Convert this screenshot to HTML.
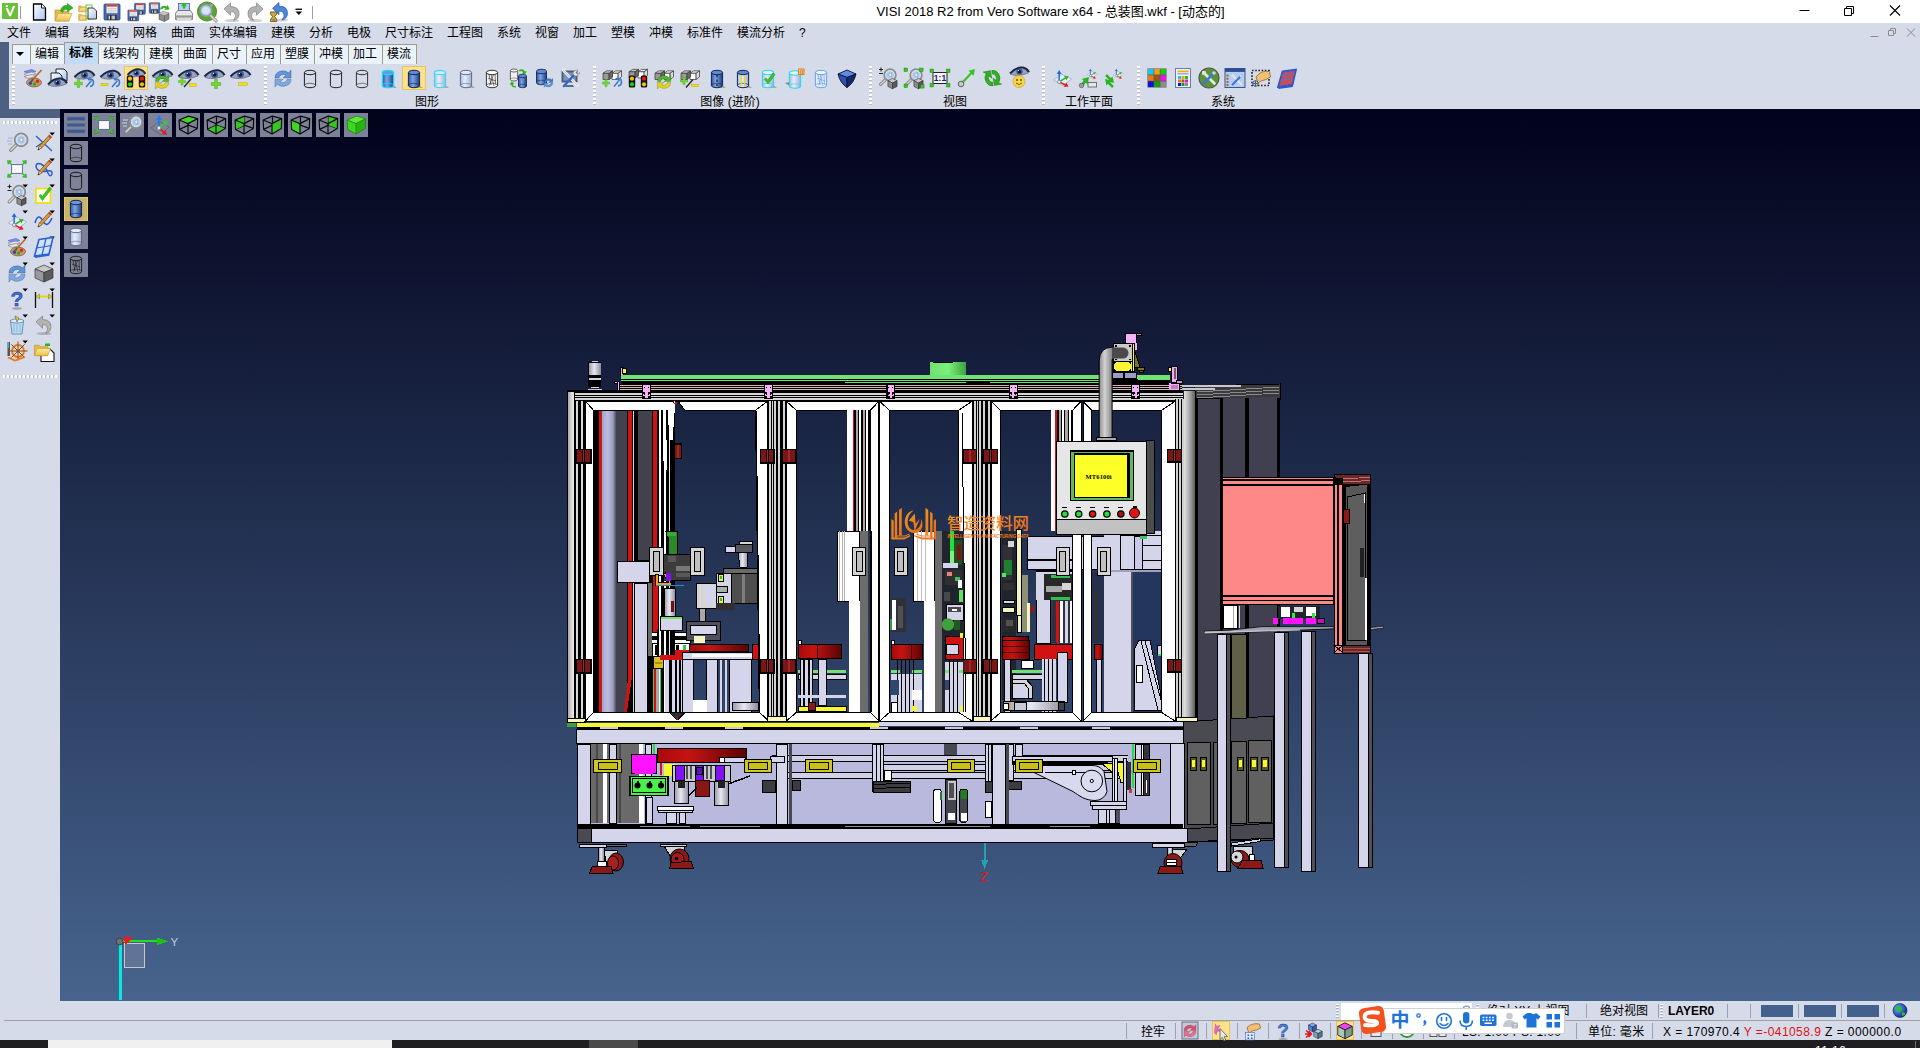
<!DOCTYPE html>
<html lang="zh-CN">
<head>
<meta charset="utf-8">
<title>VISI 2018 R2 from Vero Software x64 - 总装图.wkf - [动态的]</title>
<style>
html,body{margin:0;padding:0;}
body{width:1920px;height:1048px;overflow:hidden;background:#d6dbe9;position:relative;
 font-family:"Liberation Sans","Noto Sans CJK SC",sans-serif;font-size:12px;color:#000;}
.abs{position:absolute;}
#title{left:0;top:0;width:1920px;height:23px;background:#fff;}
#title .cap{left:0;width:2101px;top:4px;text-align:center;font-size:13px;line-height:15px;color:#000;white-space:nowrap;}
#menubar{left:0;top:23px;width:1920px;height:20px;background:#d6dbe9;}
#menubar span{position:absolute;top:2px;line-height:16px;font-size:12px;white-space:nowrap;}
#strip{left:0;top:42px;width:60px;height:76px;background:#4d6082;}
#tbpanel{left:9px;top:42px;width:1911px;height:67px;background:#d6dbe9;}
.tab{position:absolute;top:44px;height:20px;background:#eaf2fb;border:1px solid #a09b82;border-bottom:none;box-sizing:border-box;
 text-align:center;line-height:18px;font-size:12px;padding-right:1px;}
.tab.sel{top:42px;height:22px;background:#c2dcf5;font-weight:bold;line-height:20px;}
.grp{position:absolute;top:95px;font-size:12px;line-height:14px;white-space:nowrap;transform:translateX(-50%);}
.grip{position:absolute;top:66px;width:3px;height:40px;background-image:repeating-linear-gradient(180deg,#fff 0,#fff 2px,#b8bccb 2px,#b8bccb 3px,transparent 3px,transparent 4px);}
#view{left:60px;top:109px;width:1860px;height:892px;background:linear-gradient(180deg,#01021b 0%,#47648e 100%);}
#left{left:0;top:118px;width:60px;height:883px;background:#d6dbe9;}
.hgrip{position:absolute;left:3px;width:54px;height:3px;background-image:repeating-linear-gradient(90deg,#fff 0,#fff 2px,#b8bccb 2px,#b8bccb 3px,transparent 3px,transparent 4px);}
.vb{position:absolute;width:24px;height:24px;background:#7e8298;}
.vb.on{background:#c9b46e;box-shadow:inset 0 0 0 1px #e8c860;}
#status{left:0;top:1001px;width:1920px;height:39px;background:#d6dbe9;}
#task{left:0;top:1040px;width:1920px;height:8px;background:#1f1f21;overflow:hidden;}
.st{position:absolute;font-size:12px;line-height:14px;white-space:nowrap;}
.hl{position:absolute;background:#ffe28a;border:1px solid #e5c365;box-sizing:border-box;}
svg{position:absolute;overflow:visible;}
</style>
</head>
<body>
<div id="title" class="abs"><div class="cap abs">VISI 2018 R2 from Vero Software x64 - 总装图.wkf - [动态的]</div></div>
<div id="menubar" class="abs">
<span style="left:7px">文件</span>
<span style="left:45px">编辑</span>
<span style="left:83px">线架构</span>
<span style="left:133px">网格</span>
<span style="left:171px">曲面</span>
<span style="left:209px">实体编辑</span>
<span style="left:271px">建模</span>
<span style="left:309px">分析</span>
<span style="left:347px">电极</span>
<span style="left:385px">尺寸标注</span>
<span style="left:447px">工程图</span>
<span style="left:497px">系统</span>
<span style="left:535px">视窗</span>
<span style="left:573px">加工</span>
<span style="left:611px">塑模</span>
<span style="left:649px">冲模</span>
<span style="left:687px">标准件</span>
<span style="left:737px">模流分析</span>
<span style="left:799px">?</span>
</div>
<div id="strip" class="abs"></div>
<div id="tbpanel" class="abs"></div>
<div class="tab" style="left:12px;width:19px"><svg width="8" height="4" style="left:3px;top:7px"><path d="M0 0h8l-4 4z" fill="#000"/></svg></div>
<div class="tab" style="left:30px;width:35px">编辑</div>
<div class="tab sel" style="left:64px;width:35px">标准</div>
<div class="tab" style="left:98px;width:47px">线架构</div>
<div class="tab" style="left:144px;width:35px">建模</div>
<div class="tab" style="left:178px;width:35px">曲面</div>
<div class="tab" style="left:212px;width:35px">尺寸</div>
<div class="tab" style="left:246px;width:35px">应用</div>
<div class="tab" style="left:280px;width:35px">塑膜</div>
<div class="tab" style="left:314px;width:35px">冲模</div>
<div class="tab" style="left:348px;width:35px">加工</div>
<div class="tab" style="left:382px;width:35px">模流</div>
<div class="grp" style="left:136px">属性/过滤器</div>
<div class="grp" style="left:427px">图形</div>
<div class="grp" style="left:730px">图像 (进阶)</div>
<div class="grp" style="left:955px">视图</div>
<div class="grp" style="left:1089px">工作平面</div>
<div class="grp" style="left:1223px">系统</div>
<div class="grip" style="left:12px"></div>
<div class="grip" style="left:264px"></div>
<div class="grip" style="left:593px"></div>
<div class="grip" style="left:869px"></div>
<div class="grip" style="left:1042px"></div>
<div class="grip" style="left:1137px"></div>
<div class="hl" style="left:124px;top:66px;width:24px;height:24px"></div>
<div class="hl" style="left:402px;top:66px;width:24px;height:24px"></div>
<div id="view" class="abs"></div>
<div id="left" class="abs"><div class="hgrip" style="top:3px"></div><div class="hgrip" style="top:257px"></div></div>
<div class="vb" style="left:64px;top:113px"></div>
<div class="vb" style="left:92px;top:113px"></div>
<div class="vb" style="left:120px;top:113px"></div>
<div class="vb" style="left:148px;top:113px"></div>
<div class="vb" style="left:176px;top:113px"></div>
<div class="vb" style="left:204px;top:113px"></div>
<div class="vb" style="left:232px;top:113px"></div>
<div class="vb" style="left:260px;top:113px"></div>
<div class="vb" style="left:288px;top:113px"></div>
<div class="vb" style="left:316px;top:113px"></div>
<div class="vb" style="left:344px;top:113px"></div>
<div class="vb" style="left:64px;top:141px"></div>
<div class="vb" style="left:64px;top:169px"></div>
<div class="vb on" style="left:64px;top:197px"></div>
<div class="vb" style="left:64px;top:225px"></div>
<div class="vb" style="left:64px;top:253px"></div>
<div id="status" class="abs"><div class="abs" style="left:4px;top:19px;width:1916px;height:1px;background:#a0a0a0"></div></div>
<div class="abs" style="left:1341px;top:1003px;width:131px;height:17px;background:#fff"></div>
<div class="st" style="left:1487px;top:1004px">绝对 XY 上视图</div>
<div class="st" style="left:1600px;top:1004px">绝对视图</div>
<div class="st" style="left:1668px;top:1004px;font-weight:bold">LAYER0</div>
<div class="abs" style="left:1761px;top:1005px;width:32px;height:12px;background:#44608c"></div>
<div class="abs" style="left:1804px;top:1005px;width:32px;height:12px;background:#44608c"></div>
<div class="abs" style="left:1847px;top:1005px;width:32px;height:12px;background:#44608c"></div>
<div class="st" style="left:1141px;top:1025px">拴牢</div>
<div class="st" style="left:1462px;top:1025px;letter-spacing:.3px">LS: 1.00 PS: 1.00</div>
<div class="st" style="left:1588px;top:1025px;letter-spacing:.3px">单位: 毫米</div>
<div class="st" style="left:1663px;top:1025px;letter-spacing:.45px">X = 170970.4 <span style="color:#e01010">Y =-041058.9</span> Z = 000000.0</div>
<div class="hl" style="left:1212px;top:1021px;width:18px;height:19px"></div>
<div class="hl" style="left:1336px;top:1021px;width:18px;height:19px"></div>
<div class="abs" style="left:1126px;top:1023px;width:1px;height:16px;background:#9aa0b0"></div>
<div class="abs" style="left:1175px;top:1023px;width:1px;height:16px;background:#9aa0b0"></div>
<div class="abs" style="left:1206px;top:1023px;width:1px;height:16px;background:#9aa0b0"></div>
<div class="abs" style="left:1237px;top:1023px;width:1px;height:16px;background:#9aa0b0"></div>
<div class="abs" style="left:1268px;top:1023px;width:1px;height:16px;background:#9aa0b0"></div>
<div class="abs" style="left:1299px;top:1023px;width:1px;height:16px;background:#9aa0b0"></div>
<div class="abs" style="left:1330px;top:1023px;width:1px;height:16px;background:#9aa0b0"></div>
<div class="abs" style="left:1361px;top:1023px;width:1px;height:16px;background:#9aa0b0"></div>
<div class="abs" style="left:1392px;top:1023px;width:1px;height:16px;background:#9aa0b0"></div>
<div class="abs" style="left:1423px;top:1023px;width:1px;height:16px;background:#9aa0b0"></div>
<div class="abs" style="left:1454px;top:1023px;width:1px;height:16px;background:#9aa0b0"></div>
<div class="abs" style="left:1576px;top:1023px;width:1px;height:16px;background:#9aa0b0"></div>
<div class="abs" style="left:1652px;top:1023px;width:1px;height:16px;background:#9aa0b0"></div>
<div class="abs" style="left:1586px;top:1004px;width:1px;height:14px;background:#9aa0b0"></div>
<div class="abs" style="left:1658px;top:1004px;width:1px;height:14px;background:#9aa0b0"></div>
<div class="abs" style="left:1727px;top:1004px;width:1px;height:14px;background:#9aa0b0"></div>
<div class="abs" style="left:1750px;top:1004px;width:1px;height:14px;background:#9aa0b0"></div>
<div class="abs" style="left:1798px;top:1004px;width:1px;height:14px;background:#9aa0b0"></div>
<div class="abs" style="left:1841px;top:1004px;width:1px;height:14px;background:#9aa0b0"></div>
<div class="abs" style="left:1884px;top:1004px;width:1px;height:14px;background:#9aa0b0"></div>
<div class="abs" style="left:1336px;top:1004px;width:3px;height:15px;background-image:repeating-linear-gradient(180deg,#fff 0,#fff 1px,#aab0c0 1px,#aab0c0 2px,transparent 2px,transparent 3px)"></div>
<div class="abs" style="left:1476px;top:1004px;width:3px;height:15px;background-image:repeating-linear-gradient(180deg,#fff 0,#fff 1px,#aab0c0 1px,#aab0c0 2px,transparent 2px,transparent 3px)"></div>
<div class="abs" style="left:1660px;top:1004px;width:3px;height:15px;background-image:repeating-linear-gradient(180deg,#fff 0,#fff 1px,#aab0c0 1px,#aab0c0 2px,transparent 2px,transparent 3px)"></div>
<div id="task" class="abs"><div class="abs" style="left:48px;top:0;width:344px;height:8px;background:#f0f0f0"></div><div class="abs" style="left:589px;top:0;width:49px;height:8px;background:#4a4a4a"></div><div class="abs" style="left:1815px;top:4px;color:#fff;font-size:12px;line-height:14px;letter-spacing:.4px">11:16</div><div class="abs" style="left:1915px;top:1px;width:1px;height:7px;background:#6a6a6a"></div></div>
<svg class="abs" style="left:0;top:0" width="1920" height="1048" viewBox="0 0 1920 1048" shape-rendering="crispEdges">
<defs>
<linearGradient id="gpost" x1="0" x2="1" y1="0" y2="0"><stop offset="0" stop-color="#e6e6e6"/><stop offset="0.45" stop-color="#b0b0b0"/><stop offset="1" stop-color="#585858"/></linearGradient>
<linearGradient id="gpostL" x1="0" x2="1" y1="0" y2="0"><stop offset="0" stop-color="#a8a8a8"/><stop offset="0.6" stop-color="#d8d8d8"/><stop offset="1" stop-color="#e8e8e8"/></linearGradient>
<linearGradient id="gcyl" x1="0" x2="1" y1="0" y2="0"><stop offset="0" stop-color="#a6a6cc"/><stop offset="0.4" stop-color="#bcbce0"/><stop offset="0.8" stop-color="#9c9cc0"/><stop offset="1" stop-color="#5a5a70"/></linearGradient>
<linearGradient id="gpipe" x1="0" x2="1" y1="0" y2="0"><stop offset="0" stop-color="#8c8c8c"/><stop offset="0.4" stop-color="#d2d2d2"/><stop offset="1" stop-color="#7c7c7c"/></linearGradient>
<linearGradient id="gred" x1="0" x2="1" y1="0" y2="0"><stop offset="0" stop-color="#a80808"/><stop offset="0.35" stop-color="#c41414"/><stop offset="1" stop-color="#5c0404"/></linearGradient>
<linearGradient id="ggrn" x1="0" x2="1" y1="0" y2="0"><stop offset="0" stop-color="#6ee26e"/><stop offset="0.5" stop-color="#7cf07c"/><stop offset="1" stop-color="#3e9e3e"/></linearGradient>
<linearGradient id="gsil" x1="0" x2="1" y1="0" y2="0"><stop offset="0" stop-color="#9a9aa8"/><stop offset="0.45" stop-color="#e8e8f4"/><stop offset="1" stop-color="#8c8c9c"/></linearGradient>
<linearGradient id="gwm" x1="0" x2="1" y1="0" y2="1"><stop offset="0" stop-color="#f59a1e"/><stop offset="1" stop-color="#ee6a1a"/></linearGradient>
</defs>
<polygon points="1194.0,399.0 1194.0,386.0 1280.0,384.0 1280.0,399.0" fill="#3a3a3e" stroke="#000000" stroke-width="1"/>
<line x1="1197.0" y1="392.0" x2="1279.0" y2="387.0" stroke="#8a8a8a" stroke-width="1"/>
<line x1="1197.0" y1="395.0" x2="1279.0" y2="390.0" stroke="#8a8a8a" stroke-width="1"/>
<line x1="1197.0" y1="398.0" x2="1279.0" y2="393.0" stroke="#8a8a8a" stroke-width="1"/>
<rect x="1179.0" y="385.0" width="62.0" height="2.0" fill="#c8c8c8"/>
<rect x="1179.0" y="388.4" width="36.0" height="1.6" fill="#c8c8c8"/>
<rect x="1194.0" y="398.0" width="86.0" height="322.0" fill="#000000"/>
<rect x="1197.5" y="399.0" width="22.5" height="321.0" fill="#404050"/>
<rect x="1223.0" y="398.0" width="22.0" height="322.0" fill="#404050"/>
<rect x="1248.5" y="397.0" width="28.5" height="323.0" fill="#404050"/>
<polygon points="1183.0,722.0 1273.0,716.0 1273.0,840.0 1183.0,842.0" fill="#4a4a52" stroke="#000000" stroke-width="1"/>
<rect x="1187.5" y="742.0" width="22.5" height="82.0" fill="#606060" stroke="#000000" stroke-width="1"/>
<rect x="1213.0" y="742.0" width="16.0" height="82.0" fill="#606060" stroke="#000000" stroke-width="1"/>
<rect x="1231.0" y="741.0" width="15.0" height="82.0" fill="#606060" stroke="#000000" stroke-width="1"/>
<rect x="1248.5" y="740.0" width="22.5" height="82.0" fill="#606060" stroke="#000000" stroke-width="1"/>
<rect x="1190.0" y="757.0" width="6.5" height="13.0" fill="#585820" stroke="#000000" stroke-width="1"/>
<rect x="1191.5" y="760.0" width="3.5" height="7.0" fill="#f6f632"/>
<rect x="1200.0" y="757.0" width="6.5" height="13.0" fill="#585820" stroke="#000000" stroke-width="1"/>
<rect x="1201.5" y="760.0" width="3.5" height="7.0" fill="#f6f632"/>
<rect x="1237.0" y="757.0" width="6.5" height="13.0" fill="#585820" stroke="#000000" stroke-width="1"/>
<rect x="1238.5" y="760.0" width="3.5" height="7.0" fill="#f6f632"/>
<rect x="1250.5" y="757.0" width="6.5" height="13.0" fill="#585820" stroke="#000000" stroke-width="1"/>
<rect x="1252.0" y="760.0" width="3.5" height="7.0" fill="#f6f632"/>
<rect x="1261.5" y="757.0" width="6.5" height="13.0" fill="#585820" stroke="#000000" stroke-width="1"/>
<rect x="1263.0" y="760.0" width="3.5" height="7.0" fill="#f6f632"/>
<rect x="1231.0" y="634.0" width="15.5" height="84.0" fill="#606048" stroke="#000000" stroke-width="1"/>
<rect x="593.6" y="410.0" width="69.4" height="302.0" fill="#000000"/>
<rect x="599.4" y="410.0" width="2.9" height="302.0" fill="#d21212"/>
<rect x="602.3" y="410.0" width="13.2" height="302.0" fill="url(#gcyl)"/>
<rect x="615.5" y="410.0" width="11.5" height="302.0" fill="#42424e"/>
<rect x="628.3" y="410.0" width="3.7" height="266.0" fill="#d21212"/>
<polygon points="628.3,676.0 632.0,676.0 627.0,712.0 624.0,712.0" fill="#d21212"/>
<rect x="632.6" y="410.0" width="1.4" height="302.0" fill="#d6d6d6"/>
<rect x="638.0" y="410.0" width="14.0" height="150.0" fill="#42424e"/>
<rect x="652.8" y="410.0" width="4.2" height="302.0" fill="#d21212"/>
<rect x="658.8" y="410.0" width="1.6" height="302.0" fill="#ffffff"/>
<rect x="634.5" y="583.0" width="13.1" height="129.0" fill="#d4d4ea" stroke="#000000" stroke-width="1"/>
<rect x="617.7" y="561.5" width="31.3" height="20.5" fill="#d4d4ea" stroke="#000000" stroke-width="1"/>
<rect x="652.7" y="668.0" width="1.3" height="44.0" fill="#20e040"/>
<rect x="660.0" y="668.0" width="1.3" height="44.0" fill="#20e040"/>
<rect x="655.5" y="640.0" width="5.5" height="72.0" fill="#a8a8a8"/>
<rect x="725.7" y="546.0" width="9.3" height="6.0" fill="#d4d4ea" stroke="#000000" stroke-width="1"/>
<rect x="735.0" y="544.0" width="17.7" height="8.0" fill="#585860" stroke="#000000" stroke-width="1"/>
<polygon points="738.0,552.0 748.0,552.0 747.0,567.0 740.0,567.0" fill="url(#gsil)" stroke="#000000" stroke-width="1"/>
<rect x="739.0" y="541.0" width="13.7" height="3.0" fill="#d6d6d6" stroke="#000000" stroke-width="1"/>
<rect x="716.0" y="573.0" width="15.0" height="30.0" fill="#d4d4ea" stroke="#000000" stroke-width="1"/>
<rect x="731.0" y="571.0" width="26.8" height="32.0" fill="#4e4e4e" stroke="#000000" stroke-width="1"/>
<rect x="742.0" y="571.0" width="3.0" height="32.0" fill="#7c7c7c"/>
<rect x="723.0" y="568.5" width="34.0" height="4.5" fill="#6a6a6a" stroke="#000000" stroke-width="1"/>
<rect x="718.0" y="574.0" width="5.0" height="7.0" fill="#f6f632" stroke="#000000" stroke-width="1"/>
<rect x="718.0" y="596.0" width="5.0" height="7.0" fill="#f6f632" stroke="#000000" stroke-width="1"/>
<rect x="719.5" y="576.0" width="2.0" height="3.0" fill="#20c040"/>
<rect x="719.5" y="598.0" width="2.0" height="3.0" fill="#20c040"/>
<rect x="716.0" y="586.0" width="11.0" height="6.0" fill="#a8b0a8" stroke="#000000" stroke-width="1"/>
<rect x="696.5" y="583.4" width="19.5" height="24.6" fill="#d6d6d6" stroke="#000000" stroke-width="1"/>
<rect x="705.0" y="586.0" width="11.0" height="18.0" fill="#d4d4ea"/>
<rect x="699.4" y="608.0" width="5.6" height="13.0" fill="#a8a8a8" stroke="#000000" stroke-width="1"/>
<rect x="716.0" y="603.0" width="19.0" height="7.0" fill="#303030"/>
<rect x="647.6" y="632.0" width="42.4" height="11.0" fill="#ffffff" stroke="#000000" stroke-width="1"/>
<rect x="650.0" y="636.0" width="38.0" height="4.0" fill="#000000"/>
<rect x="686.0" y="621.0" width="34.0" height="19.0" fill="#50505c" stroke="#000000" stroke-width="1"/>
<rect x="690.0" y="625.0" width="26.0" height="9.0" fill="#d4d4ea" stroke="#000000" stroke-width="1"/>
<rect x="694.0" y="636.0" width="11.0" height="7.0" fill="#f4f4c0"/>
<rect x="652.0" y="643.0" width="38.0" height="13.0" fill="#ffffff" stroke="#000000" stroke-width="1"/>
<rect x="655.0" y="645.0" width="3.0" height="10.0" fill="#000000"/>
<rect x="663.0" y="645.0" width="3.0" height="10.0" fill="#000000"/>
<rect x="676.0" y="645.0" width="3.0" height="10.0" fill="#000000"/>
<rect x="683.0" y="645.0" width="3.0" height="10.0" fill="#30d050"/>
<rect x="660.0" y="650.0" width="30.0" height="14.0" fill="#d21212"/>
<rect x="689.2" y="644.4" width="59.1" height="7.3" fill="url(#gred)" stroke="#000000" stroke-width="1"/>
<rect x="752.7" y="644.4" width="6.6" height="14.6" fill="#d21212" stroke="#000000" stroke-width="1"/>
<rect x="660.0" y="652.0" width="40.0" height="8.0" fill="#d21212"/>
<rect x="682.0" y="652.4" width="70.0" height="7.3" fill="#d4d4ea" stroke="#000000" stroke-width="1"/>
<rect x="692.0" y="654.0" width="60.0" height="3.0" fill="#ffffff"/>
<rect x="682.0" y="659.7" width="11.0" height="52.3" fill="#d4d4ea" stroke="#000000" stroke-width="1"/>
<rect x="706.7" y="659.7" width="11.0" height="52.3" fill="#d4d4ea" stroke="#000000" stroke-width="1"/>
<rect x="729.3" y="659.7" width="21.9" height="52.3" fill="#d4d4ea" stroke="#000000" stroke-width="1"/>
<rect x="664.0" y="659.7" width="18.0" height="52.3" fill="#d4d4ea"/>
<line x1="666.0" y1="660.0" x2="666.0" y2="712.0" stroke="#000000" stroke-width="1"/>
<line x1="670.0" y1="660.0" x2="670.0" y2="712.0" stroke="#000000" stroke-width="1"/>
<line x1="674.0" y1="660.0" x2="674.0" y2="712.0" stroke="#000000" stroke-width="1"/>
<line x1="678.0" y1="660.0" x2="678.0" y2="712.0" stroke="#000000" stroke-width="1"/>
<rect x="693.0" y="700.0" width="13.7" height="12.0" fill="#ffffff"/>
<rect x="732.3" y="702.0" width="26.2" height="8.8" fill="url(#gsil)" stroke="#000000" stroke-width="1"/>
<rect x="798.0" y="644.4" width="43.0" height="14.0" fill="url(#gred)" stroke="#000000" stroke-width="1"/>
<line x1="817.5" y1="644.4" x2="817.5" y2="658.4" stroke="#400000" stroke-width="1"/>
<rect x="798.0" y="640.0" width="3.0" height="4.0" fill="#ffffff" stroke="#000000" stroke-width="1"/>
<rect x="798.0" y="670.0" width="48.0" height="2.8" fill="#72e272"/>
<rect x="798.0" y="674.0" width="48.0" height="5.0" fill="#d4d4ea" stroke="#000000" stroke-width="1"/>
<rect x="800.0" y="659.7" width="12.0" height="52.3" fill="#d4d4ea" stroke="#000000" stroke-width="1"/>
<rect x="818.0" y="659.7" width="8.0" height="45.3" fill="#d4d4ea" stroke="#000000" stroke-width="1"/>
<rect x="803.0" y="660.0" width="2.0" height="52.0" fill="#000000"/>
<rect x="808.0" y="660.0" width="1.5" height="52.0" fill="#000000"/>
<rect x="798.0" y="706.0" width="48.0" height="5.0" fill="#f6f632" stroke="#000000" stroke-width="1"/>
<rect x="808.0" y="702.0" width="7.0" height="8.0" fill="#901818" stroke="#000000" stroke-width="1"/>
<rect x="798.0" y="695.0" width="48.0" height="3.0" fill="#d4d4ea"/>
<rect x="837.4" y="531.0" width="22.3" height="70.0" fill="#ffffff" stroke="#000000" stroke-width="1"/>
<line x1="839.5" y1="531.0" x2="839.5" y2="601.0" stroke="#b0b0b0" stroke-width="1"/>
<line x1="842.0" y1="531.0" x2="842.0" y2="601.0" stroke="#b0b0b0" stroke-width="1"/>
<line x1="844.5" y1="531.0" x2="844.5" y2="601.0" stroke="#b0b0b0" stroke-width="1"/>
<rect x="859.7" y="531.0" width="8.0" height="189.0" fill="#6c6c6c"/>
<rect x="848.8" y="601.0" width="11.6" height="111.0" fill="#ffffff"/>
<rect x="852.4" y="547.0" width="13.5" height="28.4" fill="#d4d4d4" stroke="#000000" stroke-width="1"/>
<rect x="856.0" y="551.0" width="6.3" height="20.4" fill="#c0c0c0" stroke="#000000" stroke-width="1"/>
<rect x="890.0" y="798.0" width="0.0" height="0.0" fill="#000000"/>
<rect x="894.0" y="547.0" width="13.5" height="28.4" fill="#d4d4d4" stroke="#000000" stroke-width="1"/>
<rect x="897.6" y="551.0" width="6.3" height="20.4" fill="#c0c0c0" stroke="#000000" stroke-width="1"/>
<rect x="913.0" y="531.0" width="21.2" height="70.0" fill="#ffffff" stroke="#000000" stroke-width="1"/>
<rect x="924.0" y="601.0" width="11.6" height="111.0" fill="#ffffff"/>
<rect x="935.0" y="531.0" width="7.2" height="181.0" fill="#6c6c6c"/>
<line x1="917.0" y1="531.0" x2="917.0" y2="601.0" stroke="#c0c0c0" stroke-width="1"/>
<line x1="921.0" y1="531.0" x2="921.0" y2="601.0" stroke="#c0c0c0" stroke-width="1"/>
<line x1="925.0" y1="531.0" x2="925.0" y2="601.0" stroke="#c0c0c0" stroke-width="1"/>
<rect x="891.0" y="644.4" width="31.5" height="14.6" fill="url(#gred)" stroke="#000000" stroke-width="1"/>
<line x1="911.0" y1="644.4" x2="911.0" y2="659.0" stroke="#400000" stroke-width="1"/>
<rect x="891.0" y="640.0" width="3.0" height="4.0" fill="#ffffff" stroke="#000000" stroke-width="1"/>
<rect x="891.0" y="670.0" width="9.0" height="2.8" fill="#72e272"/>
<rect x="912.0" y="670.0" width="10.0" height="2.8" fill="#72e272"/>
<rect x="891.0" y="674.0" width="31.0" height="38.0" fill="#d4d4ea"/>
<rect x="897.0" y="659.0" width="1.4" height="53.0" fill="#000000"/>
<rect x="901.0" y="659.0" width="1.4" height="53.0" fill="#000000"/>
<rect x="905.0" y="659.0" width="1.4" height="53.0" fill="#000000"/>
<rect x="909.0" y="659.0" width="1.4" height="53.0" fill="#000000"/>
<rect x="913.0" y="659.0" width="1.4" height="53.0" fill="#000000"/>
<rect x="891.0" y="680.0" width="8.0" height="15.0" fill="#304870"/>
<rect x="912.0" y="690.0" width="10.0" height="10.0" fill="#ffffff"/>
<rect x="891.0" y="702.0" width="6.0" height="10.0" fill="#ffffff" stroke="#000000" stroke-width="1"/>
<rect x="912.0" y="706.0" width="5.0" height="5.0" fill="#f6f632"/>
<rect x="891.0" y="598.0" width="15.0" height="34.0" fill="#30303a"/>
<rect x="892.0" y="600.0" width="4.0" height="30.0" fill="#ffffff"/>
<rect x="898.0" y="606.0" width="5.0" height="22.0" fill="#505050"/>
<rect x="889.0" y="618.5" width="2.5" height="11.5" fill="#30a040"/>
<rect x="1002.0" y="531.0" width="14.0" height="169.0" fill="#20242c"/>
<rect x="1003.0" y="545.0" width="9.0" height="35.0" fill="#303038"/>
<rect x="1004.0" y="560.0" width="8.0" height="15.0" fill="#208030"/>
<rect x="1002.0" y="573.0" width="4.0" height="4.0" fill="#60e060"/>
<rect x="1008.0" y="541.0" width="6.0" height="6.0" fill="#d6d6d6"/>
<rect x="1003.0" y="583.0" width="11.0" height="7.0" fill="#303030"/>
<rect x="1003.0" y="600.0" width="11.0" height="3.0" fill="#d4d4ea" stroke="#000000" stroke-width="1"/>
<rect x="1002.0" y="607.0" width="12.0" height="5.0" fill="#f4f4c0" stroke="#000000" stroke-width="1"/>
<rect x="1003.0" y="618.0" width="12.0" height="14.0" fill="#282828"/>
<rect x="1006.0" y="620.0" width="7.0" height="6.0" fill="#505050"/>
<rect x="1016.0" y="529.4" width="5.0" height="86.1" fill="#f4f4c0" stroke="#000000" stroke-width="1"/>
<rect x="1017.0" y="615.0" width="4.0" height="17.0" fill="#f4f4c0" stroke="#000000" stroke-width="1"/>
<rect x="1022.0" y="575.0" width="6.0" height="57.0" fill="#909078"/>
<rect x="1027.0" y="603.0" width="3.0" height="29.0" fill="#f4f4c0"/>
<rect x="1030.0" y="606.0" width="4.0" height="6.0" fill="#901818"/>
<rect x="1027.6" y="536.7" width="92.4" height="32.9" fill="#d4d4ea" stroke="#000000" stroke-width="1"/>
<rect x="1027.6" y="559.0" width="47.4" height="1.5" fill="#000000"/>
<rect x="1027.6" y="569.0" width="47.4" height="1.0" fill="#000000"/>
<rect x="1036.0" y="572.0" width="14.0" height="71.0" fill="#d4d4ea" stroke="#000000" stroke-width="1"/>
<rect x="1036.0" y="569.6" width="36.0" height="30.4" fill="#d4d4ea"/>
<rect x="1036.0" y="569.6" width="36.0" height="2.4" fill="#000000"/>
<rect x="1044.0" y="574.0" width="28.0" height="26.0" fill="#282828"/>
<rect x="1046.0" y="586.0" width="16.0" height="6.0" fill="#a8a8a8"/>
<rect x="1051.0" y="575.0" width="19.0" height="3.0" fill="#30c050"/>
<rect x="1051.0" y="597.0" width="19.0" height="3.0" fill="#30c050"/>
<rect x="1062.0" y="583.0" width="9.0" height="7.0" fill="#d6d6d6"/>
<rect x="1052.0" y="600.0" width="20.0" height="43.0" fill="#30303a"/>
<rect x="1056.0" y="601.0" width="2.5" height="42.0" fill="#d21212"/>
<rect x="1060.0" y="601.0" width="3.0" height="42.0" fill="#ffffff"/>
<rect x="1065.0" y="601.0" width="3.0" height="42.0" fill="#d4d4ea"/>
<rect x="1070.0" y="601.0" width="2.0" height="42.0" fill="#ffffff"/>
<rect x="1002.0" y="636.7" width="26.0" height="6.3" fill="url(#gred)" stroke="#000000" stroke-width="1"/>
<rect x="1002.8" y="640.0" width="27.0" height="19.0" fill="url(#gred)" stroke="#000000" stroke-width="1"/>
<line x1="1002.8" y1="646.0" x2="1029.8" y2="646.0" stroke="#500000" stroke-width="1"/>
<line x1="1002.8" y1="652.0" x2="1029.8" y2="652.0" stroke="#500000" stroke-width="1"/>
<rect x="1034.0" y="644.4" width="38.8" height="14.6" fill="#d21212" stroke="#000000" stroke-width="1"/>
<rect x="1057.5" y="652.4" width="10.2" height="49.6" fill="#d4d4ea" stroke="#000000" stroke-width="1"/>
<rect x="1012.0" y="670.0" width="30.0" height="2.8" fill="#72e272"/>
<rect x="1012.0" y="674.0" width="30.0" height="5.0" fill="#d4d4ea" stroke="#000000" stroke-width="1"/>
<rect x="1004.0" y="659.0" width="6.0" height="53.0" fill="#d4d4ea" stroke="#000000" stroke-width="1"/>
<rect x="1042.0" y="659.0" width="14.0" height="53.0" fill="#d4d4ea"/>
<rect x="1044.0" y="659.0" width="1.4" height="53.0" fill="#000000"/>
<rect x="1048.0" y="659.0" width="1.4" height="53.0" fill="#000000"/>
<rect x="1052.0" y="659.0" width="1.4" height="53.0" fill="#000000"/>
<rect x="1012.0" y="683.0" width="18.0" height="15.0" fill="#d4d4ea" stroke="#000000" stroke-width="1"/>
<polygon points="1012.0,679.0 1026.0,679.0 1032.0,686.0 1032.0,698.0 1028.0,698.0 1028.0,688.0 1024.0,683.0 1012.0,683.0" fill="#d6d6d6" stroke="#000000" stroke-width="1"/>
<rect x="1021.0" y="660.0" width="12.0" height="8.0" fill="#ffffff" stroke="#000000" stroke-width="1"/>
<rect x="1003.5" y="701.3" width="61.3" height="9.5" fill="url(#gsil)" stroke="#000000" stroke-width="1"/>
<rect x="1003.5" y="703.0" width="4.5" height="6.0" fill="#ffffff" stroke="#000000" stroke-width="1"/>
<rect x="1008.5" y="702.0" width="1.5" height="8.0" fill="#f08020"/>
<rect x="1014.0" y="702.0" width="12.0" height="8.0" fill="#c8c8d8" stroke="#000000" stroke-width="1"/>
<rect x="1058.0" y="702.0" width="6.8" height="8.8" fill="#404048" stroke="#000000" stroke-width="1"/>
<rect x="1094.7" y="644.4" width="8.1" height="14.6" fill="url(#gred)" stroke="#000000" stroke-width="1"/>
<rect x="1096.0" y="659.0" width="5.0" height="53.0" fill="#d4d4ea" stroke="#000000" stroke-width="1"/>
<rect x="1104.0" y="531.0" width="57.0" height="181.0" fill="#d4d4ea"/>
<rect x="1104.0" y="569.6" width="57.0" height="2.4" fill="#a0a0c0"/>
<rect x="1120.0" y="535.7" width="43.8" height="33.6" fill="#d4d4ea" stroke="#000000" stroke-width="1"/>
<rect x="1134.0" y="536.0" width="8.6" height="33.0" fill="#c8c8e8" stroke="#000000" stroke-width="1"/>
<line x1="1142.6" y1="545.5" x2="1163.8" y2="545.5" stroke="#000" stroke-width="1"/>
<line x1="1142.6" y1="560.0" x2="1163.8" y2="560.0" stroke="#000" stroke-width="1"/>
<rect x="1131.0" y="572.0" width="32.0" height="140.0" fill="#24365e"/>
<rect x="1120.0" y="572.0" width="11.0" height="140.0" fill="#d4d4ea"/>
<rect x="1131.0" y="572.0" width="1.6" height="140.0" fill="#50505c"/>
<polygon points="1134.0,650.0 1139.0,640.0 1150.0,640.0 1164.0,710.5 1134.0,710.5" fill="#d4d4ea" stroke="#000000" stroke-width="1"/>
<line x1="1141.0" y1="641.0" x2="1158.0" y2="710.0" stroke="#000" stroke-width="1"/>
<line x1="1145.0" y1="641.0" x2="1161.0" y2="700.0" stroke="#000" stroke-width="1"/>
<rect x="1136.5" y="665.0" width="6.0" height="17.0" fill="#ffffff" stroke="#000000" stroke-width="1"/>
<rect x="1157.5" y="645.0" width="7.0" height="9.0" fill="#d4d4ea" stroke="#000000" stroke-width="1"/>
<rect x="1157.5" y="654.0" width="7.0" height="2.0" fill="#20e060"/>
<rect x="1092.0" y="572.0" width="12.0" height="71.0" fill="#24304e"/>
<rect x="1094.0" y="590.0" width="4.0" height="50.0" fill="#30303a"/>
<rect x="1056.0" y="547.0" width="13.5" height="28.4" fill="#d4d4d4" stroke="#000000" stroke-width="1"/>
<rect x="1059.6" y="551.0" width="6.3" height="20.4" fill="#c0c0c0" stroke="#000000" stroke-width="1"/>
<rect x="1097.0" y="547.0" width="13.5" height="28.4" fill="#d4d4d4" stroke="#000000" stroke-width="1"/>
<rect x="1100.6" y="551.0" width="6.3" height="20.4" fill="#c0c0c0" stroke="#000000" stroke-width="1"/>
<rect x="591.7" y="360.8" width="6.3" height="1.5" fill="#c8c8c8"/>
<rect x="588.2" y="362.0" width="13.2" height="25.0" fill="#000000"/>
<rect x="589.0" y="362.6" width="11.8" height="12.4" fill="url(#gsil)"/>
<rect x="589.0" y="378.0" width="11.8" height="1.7" fill="#d0d0e0"/>
<rect x="591.0" y="387.0" width="8.0" height="1.0" fill="#d0d0e0"/>
<rect x="587.8" y="388.9" width="14.2" height="1.3" fill="#c8c8d8"/>
<rect x="620.0" y="367.7" width="3.0" height="7.3" fill="#f8a8f8" stroke="#000000" stroke-width="1"/>
<rect x="622.5" y="368.5" width="4.0" height="4.5" fill="#f6f632" stroke="#000000" stroke-width="1"/>
<rect x="614.0" y="381.6" width="5.6" height="1.9" fill="#f8a8f8" stroke="#000000" stroke-width="1"/>
<rect x="617.5" y="381.6" width="2.1" height="8.8" fill="#f8a8f8" stroke="#000000" stroke-width="1"/>
<rect x="620.5" y="374.6" width="549.9" height="6.8" fill="#000000"/>
<rect x="620.9" y="375.0" width="549.5" height="3.9" fill="#72e272"/>
<rect x="620.9" y="380.0" width="479.1" height="1.1" fill="#72e272"/>
<rect x="1138.0" y="378.9" width="31.8" height="1.4" fill="#72e272"/>
<rect x="929.8" y="361.8" width="36.5" height="12.7" fill="url(#ggrn)"/>
<rect x="933.0" y="361.6" width="20.0" height="1.2" fill="#000000"/>
<rect x="621.6" y="381.2" width="548.4" height="3.4" fill="#000000"/>
<rect x="845.0" y="382.0" width="121.0" height="1.0" fill="#72e272"/>
<rect x="990.0" y="382.4" width="110.0" height="1.0" fill="#72e272"/>
<rect x="619.0" y="384.4" width="563.0" height="6.0" fill="#000000"/>
<rect x="620.1" y="384.9" width="561.9" height="1.1" fill="#d6b6b6"/>
<rect x="620.1" y="387.0" width="561.9" height="1.0" fill="#d6b6b6"/>
<rect x="620.1" y="388.9" width="561.9" height="1.3" fill="#d6b6b6"/>
<rect x="567.0" y="390.2" width="616.0" height="11.6" fill="#000000"/>
<rect x="575.0" y="393.0" width="608.0" height="2.2" fill="#d6d6d6"/>
<rect x="575.0" y="396.2" width="608.0" height="0.9" fill="#d6d6d6"/>
<rect x="575.0" y="398.0" width="608.0" height="2.1" fill="#d6d6d6"/>
<rect x="568.1" y="391.7" width="5.8" height="10.1" fill="#b8b8b8"/>
<rect x="642.1" y="384.2" width="8.8" height="14.8" fill="#000000"/>
<rect x="643.2" y="384.9" width="6.6" height="7.1" fill="#f6b4f6"/>
<rect x="645.3" y="392.0" width="2.4" height="6.3" fill="#f6b4f6"/>
<rect x="643.2" y="393.5" width="6.6" height="2.5" fill="#f6b4f6"/>
<rect x="643.8" y="386.6" width="1.0" height="1.2" fill="#000000"/>
<rect x="648.1" y="386.6" width="1.0" height="1.2" fill="#000000"/>
<rect x="643.8" y="394.2" width="1.0" height="1.2" fill="#000000"/>
<rect x="648.1" y="394.2" width="1.0" height="1.2" fill="#000000"/>
<rect x="764.1" y="384.2" width="8.8" height="14.8" fill="#000000"/>
<rect x="765.2" y="384.9" width="6.6" height="7.1" fill="#f6b4f6"/>
<rect x="767.3" y="392.0" width="2.4" height="6.3" fill="#f6b4f6"/>
<rect x="765.2" y="393.5" width="6.6" height="2.5" fill="#f6b4f6"/>
<rect x="765.8" y="386.6" width="1.0" height="1.2" fill="#000000"/>
<rect x="770.1" y="386.6" width="1.0" height="1.2" fill="#000000"/>
<rect x="765.8" y="394.2" width="1.0" height="1.2" fill="#000000"/>
<rect x="770.1" y="394.2" width="1.0" height="1.2" fill="#000000"/>
<rect x="886.4" y="384.2" width="8.8" height="14.8" fill="#000000"/>
<rect x="887.5" y="384.9" width="6.6" height="7.1" fill="#f6b4f6"/>
<rect x="889.6" y="392.0" width="2.4" height="6.3" fill="#f6b4f6"/>
<rect x="887.5" y="393.5" width="6.6" height="2.5" fill="#f6b4f6"/>
<rect x="888.1" y="386.6" width="1.0" height="1.2" fill="#000000"/>
<rect x="892.4" y="386.6" width="1.0" height="1.2" fill="#000000"/>
<rect x="888.1" y="394.2" width="1.0" height="1.2" fill="#000000"/>
<rect x="892.4" y="394.2" width="1.0" height="1.2" fill="#000000"/>
<rect x="1008.8" y="384.2" width="8.8" height="14.8" fill="#000000"/>
<rect x="1009.9" y="384.9" width="6.6" height="7.1" fill="#f6b4f6"/>
<rect x="1012.0" y="392.0" width="2.4" height="6.3" fill="#f6b4f6"/>
<rect x="1009.9" y="393.5" width="6.6" height="2.5" fill="#f6b4f6"/>
<rect x="1010.5" y="386.6" width="1.0" height="1.2" fill="#000000"/>
<rect x="1014.8" y="386.6" width="1.0" height="1.2" fill="#000000"/>
<rect x="1010.5" y="394.2" width="1.0" height="1.2" fill="#000000"/>
<rect x="1014.8" y="394.2" width="1.0" height="1.2" fill="#000000"/>
<rect x="1131.3" y="384.2" width="8.8" height="14.8" fill="#000000"/>
<rect x="1132.4" y="384.9" width="6.6" height="7.1" fill="#f6b4f6"/>
<rect x="1134.5" y="392.0" width="2.4" height="6.3" fill="#f6b4f6"/>
<rect x="1132.4" y="393.5" width="6.6" height="2.5" fill="#f6b4f6"/>
<rect x="1133.0" y="386.6" width="1.0" height="1.2" fill="#000000"/>
<rect x="1137.3" y="386.6" width="1.0" height="1.2" fill="#000000"/>
<rect x="1133.0" y="394.2" width="1.0" height="1.2" fill="#000000"/>
<rect x="1137.3" y="394.2" width="1.0" height="1.2" fill="#000000"/>
<rect x="567.0" y="391.0" width="1.1" height="327.0" fill="#000000"/>
<rect x="568.1" y="391.7" width="5.8" height="326.3" fill="url(#gpostL)"/>
<rect x="573.9" y="401.0" width="2.4" height="317.0" fill="#000000"/>
<rect x="576.0" y="401.0" width="2.1" height="317.0" fill="#d8d8d8"/>
<rect x="577.8" y="401.0" width="3.5" height="317.0" fill="#000000"/>
<rect x="581.1" y="401.0" width="2.1" height="317.0" fill="#d8d8d8"/>
<rect x="582.9" y="401.0" width="2.6" height="317.0" fill="#000000"/>
<rect x="567.3" y="718.0" width="18.2" height="4.5" fill="#f6f6be" stroke="#000000" stroke-width="1"/>
<rect x="567.3" y="722.5" width="8.7" height="4.5" fill="#40a040"/>
<polygon points="585.5,401.3 674.6,401.3 668.6,410.4 593.6,410.4" fill="#ffffff" stroke="#000000" stroke-width="1"/>
<polygon points="593.6,712.3 668.6,712.3 674.6,721.0 585.5,721.0" fill="#ffffff" stroke="#000000" stroke-width="1"/>
<polygon points="585.5,401.3 593.6,410.4 593.6,712.3 585.5,721.0" fill="#ffffff" stroke="#000000" stroke-width="1"/>
<polygon points="674.6,401.3 668.6,410.4 668.6,712.3 674.6,721.0" fill="#ffffff" stroke="#000000" stroke-width="1"/>
<rect x="657.4" y="410.4" width="17.2" height="301.9" fill="#000000"/>
<rect x="659.3" y="410.4" width="1.4" height="301.6" fill="#ffffff"/>
<rect x="664.4" y="410.4" width="1.5" height="301.6" fill="#ffffff"/>
<rect x="668.8" y="410.4" width="1.5" height="301.6" fill="#e8e8e8"/>
<polygon points="663.0,410.4 666.0,410.4 667.0,470.0 663.6,470.0" fill="#ffffff"/>
<polygon points="667.6,410.4 674.6,401.3 674.6,412.0 672.5,440.0 669.5,440.0" fill="#ffffff"/>
<polygon points="678.0,401.3 767.3,401.3 755.5,410.4 685.0,410.4" fill="#ffffff" stroke="#000000" stroke-width="1"/>
<polygon points="755.5,410.4 767.3,401.3 768.8,721.0 759.3,712.3" fill="#ffffff" stroke="#000000" stroke-width="1"/>
<line x1="756.2" y1="411.0" x2="760.0" y2="712.0" stroke="#000000" stroke-width="1"/>
<polygon points="585.5,721.0 593.6,712.3 669.0,712.3 677.0,720.0 685.5,712.3 759.3,712.3 768.8,721.0" fill="#ffffff" stroke="#000000" stroke-width="1"/>
<polygon points="669.0,712.3 685.5,712.3 677.3,720.0" fill="#303030" stroke="#000000" stroke-width="1"/>
<circle cx="677.3" cy="719.0" r="1.0" fill="#d21212" shape-rendering="geometricPrecision"/>
<polygon points="674.5,403.5 677.5,403.5 676.0,401.6" fill="#d21212"/>
<rect x="766.9" y="401.3" width="2.2" height="319.7" fill="#000000"/>
<rect x="768.8" y="401.3" width="2.3" height="319.7" fill="#d2d2d2"/>
<rect x="770.8" y="401.3" width="1.5" height="319.7" fill="#000000"/>
<rect x="772.0" y="401.3" width="1.3" height="319.7" fill="#d2d2d2"/>
<rect x="773.0" y="401.3" width="1.5" height="319.7" fill="#000000"/>
<rect x="774.2" y="401.3" width="2.1" height="319.7" fill="#d2d2d2"/>
<rect x="776.0" y="401.3" width="2.2" height="319.7" fill="#000000"/>
<rect x="777.9" y="401.3" width="2.3" height="319.7" fill="#d2d2d2"/>
<rect x="779.9" y="401.3" width="3.5" height="319.7" fill="#000000"/>
<rect x="783.1" y="401.3" width="2.2" height="319.7" fill="#d2d2d2"/>
<rect x="785.0" y="401.3" width="2.3" height="319.7" fill="#000000"/>
<rect x="767.9" y="716.6" width="18.1" height="4.4" fill="#f6f6be" stroke="#000000" stroke-width="1"/>
<polygon points="786.3,401.3 878.8,401.3 870.3,410.4 796.5,410.4" fill="#ffffff" stroke="#000000" stroke-width="1"/>
<polygon points="796.5,712.3 870.3,712.3 878.8,721.0 786.3,721.0" fill="#ffffff" stroke="#000000" stroke-width="1"/>
<polygon points="786.3,401.3 796.5,410.4 796.5,712.3 786.3,721.0" fill="#ffffff" stroke="#000000" stroke-width="1"/>
<polygon points="878.8,401.3 870.3,410.4 870.3,712.3 878.8,721.0" fill="#ffffff" stroke="#000000" stroke-width="1"/>
<rect x="846.6" y="410.4" width="6.2" height="120.6" fill="#ffffff"/>
<rect x="852.5" y="410.4" width="1.9" height="120.6" fill="#d21212"/>
<rect x="854.1" y="410.4" width="1.7" height="120.6" fill="#000000"/>
<rect x="855.5" y="410.4" width="2.3" height="120.6" fill="#a8a8a8"/>
<rect x="857.5" y="410.4" width="1.9" height="120.6" fill="#000000"/>
<rect x="859.2" y="410.4" width="2.1" height="120.6" fill="#ffffff"/>
<rect x="861.0" y="410.4" width="1.9" height="120.6" fill="#000000"/>
<rect x="862.6" y="410.4" width="2.5" height="120.6" fill="#a8a8a8"/>
<rect x="864.8" y="410.4" width="1.7" height="120.6" fill="#000000"/>
<rect x="866.2" y="410.4" width="1.9" height="120.6" fill="#ffffff"/>
<rect x="867.9" y="410.4" width="2.7" height="120.6" fill="#000000"/>
<rect x="870.0" y="531.0" width="1.6" height="181.0" fill="#000000"/>
<polygon points="879.6,401.3 972.0,401.3 958.5,410.4 889.6,410.4" fill="#ffffff" stroke="#000000" stroke-width="1"/>
<polygon points="889.6,712.3 958.5,712.3 972.0,721.0 879.6,721.0" fill="#ffffff" stroke="#000000" stroke-width="1"/>
<polygon points="879.6,401.3 889.6,410.4 889.6,712.3 879.6,721.0" fill="#ffffff" stroke="#000000" stroke-width="1"/>
<polygon points="972.0,401.3 958.5,410.4 958.5,712.3 972.0,721.0" fill="#ffffff" stroke="#000000" stroke-width="1"/>
<line x1="962.0" y1="411.0" x2="966.0" y2="712.0" stroke="#000000" stroke-width="1"/>
<rect x="972.0" y="401.3" width="2.1" height="319.7" fill="#000000"/>
<rect x="973.8" y="401.3" width="2.2" height="319.7" fill="#d2d2d2"/>
<rect x="975.8" y="401.3" width="1.5" height="319.7" fill="#000000"/>
<rect x="976.9" y="401.3" width="1.3" height="319.7" fill="#d2d2d2"/>
<rect x="977.9" y="401.3" width="1.5" height="319.7" fill="#000000"/>
<rect x="979.0" y="401.3" width="2.0" height="319.7" fill="#d2d2d2"/>
<rect x="980.8" y="401.3" width="2.1" height="319.7" fill="#000000"/>
<rect x="982.6" y="401.3" width="2.2" height="319.7" fill="#d2d2d2"/>
<rect x="984.5" y="401.3" width="3.4" height="319.7" fill="#000000"/>
<rect x="987.6" y="401.3" width="2.1" height="319.7" fill="#d2d2d2"/>
<rect x="989.5" y="401.3" width="2.2" height="319.7" fill="#000000"/>
<rect x="973.0" y="716.6" width="17.4" height="4.4" fill="#f6f6be" stroke="#000000" stroke-width="1"/>
<polygon points="991.0,401.3 1081.2,401.3 1072.4,410.4 1000.6,410.4" fill="#ffffff" stroke="#000000" stroke-width="1"/>
<polygon points="1000.6,712.3 1072.4,712.3 1081.2,721.0 991.0,721.0" fill="#ffffff" stroke="#000000" stroke-width="1"/>
<polygon points="991.0,401.3 1000.6,410.4 1000.6,712.3 991.0,721.0" fill="#ffffff" stroke="#000000" stroke-width="1"/>
<polygon points="1081.2,401.3 1072.4,410.4 1072.4,712.3 1081.2,721.0" fill="#ffffff" stroke="#000000" stroke-width="1"/>
<rect x="1051.0" y="410.4" width="4.5" height="120.6" fill="#ffffff"/>
<rect x="1055.2" y="410.4" width="2.4" height="120.6" fill="#d21212"/>
<rect x="1057.3" y="410.4" width="1.7" height="120.6" fill="#000000"/>
<rect x="1058.6" y="410.4" width="2.2" height="120.6" fill="#a8a8a8"/>
<rect x="1060.6" y="410.4" width="1.8" height="120.6" fill="#000000"/>
<rect x="1062.1" y="410.4" width="2.0" height="120.6" fill="#ffffff"/>
<rect x="1063.9" y="410.4" width="1.8" height="120.6" fill="#000000"/>
<rect x="1065.4" y="410.4" width="2.4" height="120.6" fill="#a8a8a8"/>
<rect x="1067.6" y="410.4" width="1.7" height="120.6" fill="#000000"/>
<rect x="1068.9" y="410.4" width="1.8" height="120.6" fill="#ffffff"/>
<rect x="1070.5" y="410.4" width="2.2" height="120.6" fill="#000000"/>
<polygon points="1083.0,401.3 1175.0,401.3 1161.4,410.4 1091.8,410.4" fill="#ffffff" stroke="#000000" stroke-width="1"/>
<polygon points="1091.8,712.3 1161.4,712.3 1175.0,721.0 1083.0,721.0" fill="#ffffff" stroke="#000000" stroke-width="1"/>
<polygon points="1083.0,401.3 1091.8,410.4 1091.8,712.3 1083.0,721.0" fill="#ffffff" stroke="#000000" stroke-width="1"/>
<polygon points="1175.0,401.3 1161.4,410.4 1161.4,712.3 1175.0,721.0" fill="#ffffff" stroke="#000000" stroke-width="1"/>
<rect x="1175.0" y="399.0" width="1.7" height="322.0" fill="#000000"/>
<rect x="1176.4" y="399.0" width="1.9" height="322.0" fill="#d0d0d0"/>
<rect x="1178.0" y="399.0" width="1.7" height="322.0" fill="#000000"/>
<rect x="1179.4" y="399.0" width="1.7" height="322.0" fill="#d0d0d0"/>
<rect x="1180.8" y="399.0" width="1.9" height="322.0" fill="#000000"/>
<rect x="1182.4" y="399.0" width="1.9" height="322.0" fill="#d0d0d0"/>
<rect x="1183.6" y="391.0" width="11.8" height="326.0" fill="url(#gpost)"/>
<line x1="1195.6" y1="391.0" x2="1195.6" y2="717.0" stroke="#000" stroke-width="1"/>
<rect x="1176.0" y="717.0" width="21.0" height="4.5" fill="#f6f6be" stroke="#000000" stroke-width="1"/>
<rect x="575.5" y="448.6" width="16.0" height="15.0" fill="#000000"/>
<rect x="576.7" y="450.1" width="5.5" height="12.0" fill="#7a1616"/>
<rect x="584.8" y="450.1" width="5.5" height="12.0" fill="#7a1616"/>
<rect x="582.7" y="450.1" width="1.6" height="12.0" fill="#a02828"/>
<rect x="760.0" y="448.6" width="14.6" height="15.0" fill="#000000"/>
<rect x="761.2" y="450.1" width="4.8" height="12.0" fill="#7a1616"/>
<rect x="768.6" y="450.1" width="4.8" height="12.0" fill="#7a1616"/>
<rect x="766.5" y="450.1" width="1.6" height="12.0" fill="#a02828"/>
<rect x="782.0" y="448.6" width="14.0" height="15.0" fill="#000000"/>
<rect x="783.2" y="450.1" width="4.5" height="12.0" fill="#7a1616"/>
<rect x="790.3" y="450.1" width="4.5" height="12.0" fill="#7a1616"/>
<rect x="788.2" y="450.1" width="1.6" height="12.0" fill="#a02828"/>
<rect x="962.8" y="448.6" width="14.0" height="15.0" fill="#000000"/>
<rect x="964.0" y="450.1" width="4.5" height="12.0" fill="#7a1616"/>
<rect x="971.1" y="450.1" width="4.5" height="12.0" fill="#7a1616"/>
<rect x="969.0" y="450.1" width="1.6" height="12.0" fill="#a02828"/>
<rect x="982.6" y="448.6" width="15.4" height="15.0" fill="#000000"/>
<rect x="983.8" y="450.1" width="5.2" height="12.0" fill="#7a1616"/>
<rect x="991.6" y="450.1" width="5.2" height="12.0" fill="#7a1616"/>
<rect x="989.5" y="450.1" width="1.6" height="12.0" fill="#a02828"/>
<rect x="1166.6" y="448.6" width="15.6" height="14.0" fill="#000000"/>
<rect x="1167.8" y="450.1" width="5.3" height="11.0" fill="#7a1616"/>
<rect x="1175.7" y="450.1" width="5.3" height="11.0" fill="#7a1616"/>
<rect x="1173.6" y="450.1" width="1.6" height="11.0" fill="#a02828"/>
<rect x="575.5" y="658.6" width="16.0" height="15.0" fill="#000000"/>
<rect x="576.7" y="660.1" width="5.5" height="12.0" fill="#7a1616"/>
<rect x="584.8" y="660.1" width="5.5" height="12.0" fill="#7a1616"/>
<rect x="582.7" y="660.1" width="1.6" height="12.0" fill="#a02828"/>
<rect x="760.0" y="658.6" width="14.6" height="15.0" fill="#000000"/>
<rect x="761.2" y="660.1" width="4.8" height="12.0" fill="#7a1616"/>
<rect x="768.6" y="660.1" width="4.8" height="12.0" fill="#7a1616"/>
<rect x="766.5" y="660.1" width="1.6" height="12.0" fill="#a02828"/>
<rect x="782.0" y="658.6" width="14.0" height="15.0" fill="#000000"/>
<rect x="783.2" y="660.1" width="4.5" height="12.0" fill="#7a1616"/>
<rect x="790.3" y="660.1" width="4.5" height="12.0" fill="#7a1616"/>
<rect x="788.2" y="660.1" width="1.6" height="12.0" fill="#a02828"/>
<rect x="962.8" y="658.6" width="14.0" height="15.0" fill="#000000"/>
<rect x="964.0" y="660.1" width="4.5" height="12.0" fill="#7a1616"/>
<rect x="971.1" y="660.1" width="4.5" height="12.0" fill="#7a1616"/>
<rect x="969.0" y="660.1" width="1.6" height="12.0" fill="#a02828"/>
<rect x="982.6" y="658.6" width="15.4" height="15.0" fill="#000000"/>
<rect x="983.8" y="660.1" width="5.2" height="12.0" fill="#7a1616"/>
<rect x="991.6" y="660.1" width="5.2" height="12.0" fill="#7a1616"/>
<rect x="989.5" y="660.1" width="1.6" height="12.0" fill="#a02828"/>
<rect x="1166.6" y="658.6" width="15.6" height="14.0" fill="#000000"/>
<rect x="1167.8" y="660.1" width="5.3" height="11.0" fill="#7a1616"/>
<rect x="1175.7" y="660.1" width="5.3" height="11.0" fill="#7a1616"/>
<rect x="1173.6" y="660.1" width="1.6" height="11.0" fill="#a02828"/>
<rect x="674.0" y="443.0" width="8.0" height="16.0" fill="#000000"/>
<rect x="675.2" y="444.5" width="1.5" height="13.0" fill="#7a1616"/>
<rect x="679.3" y="444.5" width="1.5" height="13.0" fill="#7a1616"/>
<rect x="677.2" y="444.5" width="1.6" height="13.0" fill="#a02828"/>
<rect x="648.0" y="583.0" width="4.4" height="73.0" fill="#6c6c6c"/>
<rect x="653.8" y="583.0" width="3.8" height="47.0" fill="#d21212"/>
<rect x="720.0" y="659.7" width="1.8" height="52.3" fill="#d4d4ea"/>
<rect x="725.4" y="659.7" width="1.7" height="52.3" fill="#d4d4ea"/>
<rect x="653.4" y="656.8" width="10.2" height="11.7" fill="#d8c020" stroke="#000000" stroke-width="1"/>
<rect x="655.0" y="662.0" width="7.0" height="2.0" fill="#a89010"/>
<rect x="664.5" y="659.7" width="16.5" height="52.3" fill="#000000"/>
<rect x="665.0" y="659.7" width="3.8" height="52.3" fill="#d4d4ea"/>
<rect x="671.7" y="659.7" width="3.6" height="52.3" fill="#d4d4ea"/>
<rect x="676.8" y="659.7" width="2.2" height="52.3" fill="#d4d4ea"/>
<rect x="660.0" y="654.6" width="21.0" height="5.1" fill="#d21212"/>
<rect x="655.5" y="668.5" width="3.5" height="43.5" fill="#a8a8a8"/>
<rect x="660.0" y="668.5" width="1.4" height="43.5" fill="#20e040"/>
<rect x="652.7" y="668.5" width="1.3" height="43.5" fill="#20e040"/>
<rect x="663.6" y="554.0" width="26.4" height="26.0" fill="#3c3c3c" stroke="#000000" stroke-width="1"/>
<rect x="668.0" y="556.0" width="8.0" height="6.0" fill="#585858"/>
<rect x="676.0" y="566.0" width="14.0" height="5.0" fill="#787878"/>
<rect x="676.0" y="573.0" width="14.0" height="4.0" fill="#585858"/>
<polygon points="665.8,531.0 677.0,531.0 678.0,554.0 668.0,554.0 669.0,540.0" fill="#2a8a2a" stroke="#000000" stroke-width="1"/>
<rect x="666.5" y="532.0" width="9.5" height="4.0" fill="#38a838"/>
<rect x="649.8" y="547.0" width="13.5" height="28.4" fill="#d4d4d4" stroke="#000000" stroke-width="1"/>
<rect x="653.4" y="551.0" width="6.3" height="20.4" fill="#c0c0c0" stroke="#000000" stroke-width="1"/>
<rect x="690.7" y="547.0" width="13.5" height="28.4" fill="#d4d4d4" stroke="#000000" stroke-width="1"/>
<rect x="694.3" y="551.0" width="6.3" height="20.4" fill="#c0c0c0" stroke="#000000" stroke-width="1"/>
<polygon points="655.0,585.0 655.0,574.0 658.0,574.0 658.0,582.0 668.5,582.0 663.0,574.0 665.5,573.0 672.0,585.0" fill="#f0a020" stroke="#000000" stroke-width="1"/>
<rect x="665.5" y="573.0" width="5.5" height="8.0" fill="#8212f6"/>
<rect x="656.0" y="584.6" width="28.0" height="1.4" fill="#2090d0"/>
<rect x="664.4" y="588.0" width="10.9" height="28.0" fill="url(#gsil)" stroke="#000000" stroke-width="1"/>
<rect x="670.5" y="601.0" width="3.5" height="11.0" fill="#701010"/>
<rect x="660.7" y="616.0" width="21.9" height="14.0" fill="#d4d4ea" stroke="#000000" stroke-width="1"/>
<rect x="661.0" y="616.5" width="21.0" height="2.0" fill="#72e272"/>
<rect x="942.0" y="531.0" width="22.0" height="181.0" fill="#20242c"/>
<rect x="950.0" y="531.0" width="4.0" height="31.0" fill="#20e040"/>
<rect x="950.0" y="551.0" width="5.0" height="12.0" fill="#80f080"/>
<rect x="954.0" y="540.0" width="8.0" height="25.0" fill="#205020"/>
<rect x="957.0" y="545.0" width="4.0" height="15.0" fill="#7a1414"/>
<rect x="943.0" y="563.0" width="15.0" height="5.0" fill="#d4d4ea"/>
<rect x="945.0" y="570.0" width="17.0" height="15.0" fill="#303030"/>
<rect x="947.0" y="572.0" width="5.0" height="4.0" fill="#f08080"/>
<rect x="955.0" y="577.0" width="5.0" height="4.0" fill="#40c060"/>
<rect x="958.0" y="580.0" width="4.0" height="8.0" fill="#ffffff"/>
<rect x="959.0" y="590.0" width="3.5" height="12.0" fill="#60e060"/>
<rect x="944.0" y="592.0" width="6.0" height="9.0" fill="#484848"/>
<rect x="946.0" y="604.0" width="17.0" height="16.0" fill="#d4d4ea" stroke="#000000" stroke-width="1"/>
<rect x="948.0" y="607.0" width="13.0" height="5.0" fill="#484848"/>
<rect x="952.0" y="609.0" width="5.0" height="2.0" fill="#ffffff"/>
<circle cx="948.0" cy="624.5" r="6.2" fill="#3ea03e" shape-rendering="geometricPrecision"/>
<rect x="954.0" y="620.0" width="6.0" height="10.0" fill="#205820"/>
<rect x="945.8" y="636.0" width="17.6" height="23.0" fill="#d21212" stroke="#000000" stroke-width="1"/>
<rect x="946.0" y="644.0" width="12.0" height="10.0" fill="#d4d4ea" stroke="#000000" stroke-width="1"/>
<rect x="960.0" y="633.0" width="3.0" height="5.0" fill="#f6f632"/>
<rect x="945.0" y="662.0" width="18.0" height="50.0" fill="#d4d4ea"/>
<rect x="945.0" y="670.0" width="5.0" height="2.8" fill="#72e272"/>
<rect x="959.0" y="670.0" width="4.0" height="2.8" fill="#72e272"/>
<rect x="949.0" y="659.0" width="1.4" height="53.0" fill="#000000"/>
<rect x="953.0" y="659.0" width="1.4" height="53.0" fill="#000000"/>
<rect x="957.0" y="659.0" width="1.4" height="53.0" fill="#000000"/>
<rect x="945.0" y="680.0" width="4.0" height="10.0" fill="#304870"/>
<rect x="960.0" y="706.0" width="3.0" height="5.0" fill="#f6f632"/>
<rect x="1125.9" y="333.8" width="10.7" height="14.9" fill="#f8b0f8" stroke="#000000" stroke-width="1"/>
<rect x="1136.6" y="333.8" width="5.2" height="1.4" fill="#c080c0" stroke="#000000" stroke-width="1"/>
<rect x="1134.0" y="343.0" width="2.6" height="7.0" fill="#f8b0f8"/>
<rect x="1113.7" y="343.7" width="18.3" height="17.9" fill="#cacaca" stroke="#000000" stroke-width="1"/>
<rect x="1115.2" y="345.2" width="1.6" height="1.6" fill="#000000"/>
<rect x="1129.0" y="345.2" width="1.6" height="1.6" fill="#000000"/>
<rect x="1115.2" y="358.6" width="1.6" height="1.6" fill="#000000"/>
<rect x="1129.0" y="358.6" width="1.6" height="1.6" fill="#000000"/>
<rect x="1113.0" y="361.6" width="21.0" height="9.6" fill="#f6f632" stroke="#000000" stroke-width="1"/>
<rect x="1132.0" y="343.7" width="2.2" height="27.5" fill="#f6f632" stroke="#000000" stroke-width="1"/>
<polygon points="1134.4,350.0 1140.3,367.6 1134.4,367.6" fill="#7c7416" stroke="#000000" stroke-width="1"/>
<polygon points="1113.6,362.2 1116.0,362.2 1113.6,365.0" fill="#000000"/>
<polygon points="1131.4,362.2 1129.0,362.2 1131.4,365.0" fill="#000000"/>
<polygon points="1113.6,370.8 1116.0,370.8 1113.6,368.0" fill="#000000"/>
<polygon points="1131.4,370.8 1129.0,370.8 1131.4,368.0" fill="#000000"/>
<rect x="1137.6" y="367.6" width="6.8" height="2.4" fill="#7c7416" stroke="#000000" stroke-width="1"/>
<rect x="1139.5" y="370.0" width="3.5" height="2.6" fill="#605810" stroke="#000000" stroke-width="1"/>
<rect x="1112.0" y="372.0" width="24.2" height="6.8" fill="#9c9cc0" stroke="#000000" stroke-width="1"/>
<rect x="1123.2" y="372.0" width="1.8" height="6.8" fill="#000000"/>
<path d="M1099.2 437.5V361.5Q1099.2 347.200 1112.500 347.200H1113v12.300h-.9v78z" fill="url(#gpipe)" stroke="#000" stroke-width="1" shape-rendering="geometricPrecision"/>
<path d="M1112 347.6h11a5.500 5.500 0 0 1 0 11h-11z" fill="#4a4a4a" shape-rendering="geometricPrecision"/>
<rect x="1096.0" y="437.5" width="20.0" height="3.0" fill="#a8a8a8" stroke="#000000" stroke-width="1"/>
<rect x="1168.6" y="367.0" width="2.4" height="4.6" fill="#f6f632" stroke="#000000" stroke-width="1"/>
<rect x="1171.7" y="366.6" width="5.3" height="15.4" fill="#f4aaf4" stroke="#000000" stroke-width="1"/>
<rect x="1173.6" y="368.2" width="2.6" height="10.3" fill="#705870"/>
<rect x="1176.0" y="380.5" width="6.5" height="2.5" fill="#d090d0" stroke="#000000" stroke-width="1"/>
<rect x="1169.0" y="383.0" width="10.0" height="7.0" fill="#f4aaf4" stroke="#000000" stroke-width="1"/>
<rect x="1171.0" y="385.0" width="7.0" height="4.0" fill="#c080c0"/>
<rect x="1169.0" y="383.0" width="1.5" height="7.0" fill="#f4aaf4"/>
<rect x="1146.3" y="440.4" width="8.0" height="93.1" fill="#4c4c4c" stroke="#000000" stroke-width="1"/>
<rect x="1056.8" y="441.2" width="89.7" height="77.8" fill="#e6e6e6" stroke="#000000" stroke-width="1"/>
<rect x="1056.8" y="519.0" width="89.7" height="15.0" fill="#c2c2c2" stroke="#000000" stroke-width="1"/>
<rect x="1069.6" y="450.4" width="64.4" height="50.6" fill="#000000"/>
<rect x="1070.8" y="451.6" width="62.0" height="48.0" fill="#62b862"/>
<rect x="1073.8" y="453.4" width="55.7" height="44.6" fill="#000000"/>
<rect x="1075.2" y="454.8" width="52.1" height="41.8" fill="#ffff28"/>
<text x="1098.6" y="478.6" font-family="Liberation Serif,serif" font-weight="bold" font-size="6.5" text-anchor="middle" fill="#000" textLength="26">MT6100i</text>
<circle cx="1064.8" cy="514.0" r="3.8" fill="#000000" shape-rendering="geometricPrecision"/>
<circle cx="1064.8" cy="514.0" r="2.5" fill="#20e040" shape-rendering="geometricPrecision"/>
<rect x="1062.3" y="506.6" width="5.0" height="1.4" fill="#000000"/>
<circle cx="1078.7" cy="514.0" r="3.8" fill="#000000" shape-rendering="geometricPrecision"/>
<circle cx="1078.7" cy="514.0" r="2.5" fill="#20e040" shape-rendering="geometricPrecision"/>
<rect x="1076.2" y="506.6" width="5.0" height="1.4" fill="#000000"/>
<circle cx="1092.6" cy="514.0" r="3.8" fill="#000000" shape-rendering="geometricPrecision"/>
<circle cx="1092.6" cy="514.0" r="2.5" fill="#e01818" shape-rendering="geometricPrecision"/>
<rect x="1090.1" y="506.6" width="5.0" height="1.4" fill="#000000"/>
<circle cx="1106.9" cy="514.0" r="3.8" fill="#000000" shape-rendering="geometricPrecision"/>
<circle cx="1106.9" cy="514.0" r="2.5" fill="#20e040" shape-rendering="geometricPrecision"/>
<rect x="1104.4" y="506.6" width="5.0" height="1.4" fill="#000000"/>
<circle cx="1120.8" cy="514.0" r="3.8" fill="#000000" shape-rendering="geometricPrecision"/>
<circle cx="1120.8" cy="514.0" r="2.5" fill="#b01010" shape-rendering="geometricPrecision"/>
<rect x="1118.3" y="506.6" width="5.0" height="1.4" fill="#000000"/>
<circle cx="1134.5" cy="513.0" r="5.0" fill="#e01414" stroke="#000000" stroke-width="1" shape-rendering="geometricPrecision"/>
<rect x="1133.0" y="505.5" width="3.5" height="2.5" fill="#000000"/>
<rect x="1140.0" y="536.0" width="7.0" height="2.5" fill="#40c060"/>
<rect x="576.8" y="722.5" width="302.6" height="4.5" fill="#f6f632"/>
<rect x="879.4" y="722.0" width="303.6" height="4.0" fill="#d4d4ea"/>
<rect x="576.8" y="726.6" width="606.2" height="3.2" fill="#000000"/>
<rect x="600.0" y="727.2" width="18.0" height="1.4" fill="#c8c8d8"/>
<rect x="665.0" y="727.2" width="18.0" height="1.4" fill="#c8c8d8"/>
<rect x="725.0" y="727.2" width="18.0" height="1.4" fill="#c8c8d8"/>
<rect x="870.0" y="727.2" width="18.0" height="1.4" fill="#c8c8d8"/>
<rect x="945.0" y="727.2" width="18.0" height="1.4" fill="#c8c8d8"/>
<rect x="1020.0" y="727.2" width="18.0" height="1.4" fill="#c8c8d8"/>
<rect x="1092.0" y="727.2" width="18.0" height="1.4" fill="#c8c8d8"/>
<rect x="577.0" y="744.0" width="606.0" height="85.0" fill="#b9b9dd"/>
<rect x="576.8" y="729.8" width="606.2" height="13.4" fill="#d4d4ea" stroke="#000000" stroke-width="1"/>
<rect x="590.0" y="744.0" width="50.0" height="79.0" fill="#6a6a6a"/>
<rect x="603.0" y="744.0" width="3.5" height="79.0" fill="#ffffff"/>
<rect x="609.0" y="744.0" width="7.0" height="79.0" fill="#d4d4ea" stroke="#000000" stroke-width="1"/>
<rect x="638.8" y="744.0" width="3.7" height="79.0" fill="#ffffff"/>
<rect x="645.5" y="744.0" width="5.5" height="79.0" fill="#d4d4ea" stroke="#000000" stroke-width="1"/>
<rect x="596.0" y="744.0" width="2.0" height="79.0" fill="#484848"/>
<rect x="619.0" y="744.0" width="2.0" height="79.0" fill="#484848"/>
<rect x="652.5" y="744.0" width="2.5" height="16.0" fill="#20e040"/>
<rect x="577.5" y="744.0" width="13.0" height="85.0" fill="#d4d4ea" stroke="#000000" stroke-width="1"/>
<rect x="883.0" y="755.3" width="245.0" height="6.2" fill="#d0d0e6"/>
<line x1="883.0" y1="755.3" x2="1128.0" y2="755.3" stroke="#000" stroke-width="1"/>
<line x1="883.0" y1="761.5" x2="1128.0" y2="761.5" stroke="#000" stroke-width="1"/>
<rect x="883.0" y="764.5" width="245.0" height="6.1" fill="#d0d0e6"/>
<line x1="883.0" y1="764.5" x2="1128.0" y2="764.5" stroke="#000" stroke-width="1"/>
<line x1="883.0" y1="770.6" x2="1128.0" y2="770.6" stroke="#000" stroke-width="1"/>
<rect x="883.0" y="772.3" width="245.0" height="6.4" fill="#d0d0e6"/>
<line x1="883.0" y1="772.3" x2="1128.0" y2="772.3" stroke="#000" stroke-width="1"/>
<line x1="883.0" y1="778.7" x2="1128.0" y2="778.7" stroke="#000" stroke-width="1"/>
<rect x="772.0" y="755.3" width="101.0" height="6.2" fill="#d0d0e6" stroke="#000000" stroke-width="1"/>
<rect x="787.0" y="772.0" width="86.0" height="6.7" fill="#d0d0e6" stroke="#000000" stroke-width="1"/>
<rect x="890.0" y="765.5" width="0.8" height="0.8" fill="#000000"/>
<rect x="896.0" y="765.5" width="0.8" height="0.8" fill="#000000"/>
<rect x="902.0" y="765.5" width="0.8" height="0.8" fill="#000000"/>
<rect x="906.0" y="765.5" width="0.8" height="0.8" fill="#000000"/>
<rect x="910.0" y="765.5" width="0.8" height="0.8" fill="#000000"/>
<rect x="914.0" y="765.5" width="0.8" height="0.8" fill="#000000"/>
<rect x="918.0" y="765.5" width="0.8" height="0.8" fill="#000000"/>
<rect x="924.0" y="765.5" width="0.8" height="0.8" fill="#000000"/>
<rect x="930.0" y="765.5" width="0.8" height="0.8" fill="#000000"/>
<rect x="944.4" y="743.6" width="12.4" height="11.7" fill="#484850"/>
<rect x="872.8" y="744.0" width="11.0" height="47.0" fill="#d4d4ea" stroke="#000000" stroke-width="1"/>
<line x1="876.0" y1="744.0" x2="876.0" y2="791.0" stroke="#000" stroke-width="1"/>
<line x1="880.5" y1="744.0" x2="880.5" y2="791.0" stroke="#000" stroke-width="1"/>
<rect x="985.0" y="744.0" width="6.8" height="47.0" fill="#d4d4ea" stroke="#000000" stroke-width="1"/>
<line x1="988.0" y1="744.0" x2="988.0" y2="791.0" stroke="#000" stroke-width="1"/>
<rect x="1008.0" y="744.0" width="5.0" height="36.0" fill="#d4d4ea" stroke="#000000" stroke-width="1"/>
<rect x="1015.0" y="744.0" width="7.0" height="12.0" fill="#d4d4ea" stroke="#000000" stroke-width="1"/>
<rect x="873.6" y="781.0" width="37.2" height="11.0" fill="#3c3c40" stroke="#000000" stroke-width="1"/>
<line x1="873.6" y1="784.5" x2="910.8" y2="783.0" stroke="#000" stroke-width="1"/>
<line x1="873.6" y1="788.5" x2="910.8" y2="787.0" stroke="#000" stroke-width="1"/>
<rect x="985.0" y="781.0" width="18.0" height="11.0" fill="#3c3c40" stroke="#000000" stroke-width="1"/>
<rect x="1008.0" y="781.0" width="13.0" height="8.0" fill="#3c3c40" stroke="#000000" stroke-width="1"/>
<rect x="884.5" y="770.0" width="7.3" height="10.0" fill="#ffffff" stroke="#000000" stroke-width="1"/>
<rect x="776.0" y="744.0" width="11.7" height="85.0" fill="#d4d4ea" stroke="#000000" stroke-width="1"/>
<rect x="788.6" y="744.0" width="2.9" height="85.0" fill="#484850"/>
<rect x="992.6" y="744.0" width="12.6" height="85.0" fill="#d4d4ea" stroke="#000000" stroke-width="1"/>
<rect x="1006.0" y="744.0" width="3.0" height="85.0" fill="#484850"/>
<rect x="1170.4" y="743.0" width="13.6" height="87.0" fill="#d4d4ea" stroke="#000000" stroke-width="1"/>
<rect x="933.4" y="789" width="8" height="33.5" rx="3.6" fill="#fff" stroke="#000"/>
<rect x="940.0" y="792.0" width="1.6" height="8.0" fill="#208020"/>
<rect x="945.0" y="779.7" width="11.8" height="43.3" fill="#44444e" stroke="#000000" stroke-width="1"/>
<rect x="948.0" y="781.0" width="8.0" height="19.0" fill="#c8c8c8"/>
<rect x="949.0" y="783.0" width="5.0" height="15.0" fill="#505050"/>
<rect x="947.5" y="813.0" width="7.5" height="7.0" fill="#ffffff"/>
<rect x="959.7" y="789" width="8" height="33.5" rx="3.6" fill="#44444e" stroke="#000"/>
<rect x="961.0" y="790.0" width="5.6" height="9.0" fill="#208020"/>
<rect x="960.6" y="813.0" width="6.2" height="8.0" fill="#ffffff"/>
<rect x="985.0" y="801.6" width="6.0" height="15.4" fill="#ffffff" stroke="#000000" stroke-width="1"/>
<rect x="631.0" y="754.6" width="25.4" height="19.0" fill="#ff12ff" stroke="#000000" stroke-width="1"/>
<rect x="631.5" y="755" width="24.5" height="18.5" rx="3" fill="#ff12ff"/>
<rect x="664.4" y="764.0" width="12.4" height="11.8" fill="#f6f632"/>
<rect x="657.0" y="748.0" width="89.0" height="14.6" fill="url(#gred)" stroke="#000000" stroke-width="1"/>
<rect x="660.0" y="762.6" width="2.0" height="12.4" fill="#d21212"/>
<rect x="719.0" y="757.0" width="26.0" height="5.5" fill="#d4d4ea" stroke="#000000" stroke-width="1"/>
<rect x="719.0" y="757.5" width="5.0" height="4.5" fill="#ffffff" stroke="#000000" stroke-width="1"/>
<rect x="672.0" y="765.5" width="58.0" height="15.5" fill="#c8c8d0" stroke="#000000" stroke-width="1"/>
<rect x="675.3" y="765.5" width="8.8" height="14.5" fill="#8212f6" stroke="#000000" stroke-width="1"/>
<rect x="695.0" y="765.5" width="8.8" height="14.5" fill="#8212f6" stroke="#000000" stroke-width="1"/>
<rect x="715.5" y="765.5" width="8.8" height="14.5" fill="#8212f6" stroke="#000000" stroke-width="1"/>
<rect x="696.5" y="767.0" width="6.0" height="7.0" fill="#6010c0" stroke="#000000" stroke-width="1"/>
<rect x="686.0" y="766.0" width="2.0" height="13.0" fill="#505050"/>
<rect x="690.0" y="766.0" width="2.0" height="13.0" fill="#505050"/>
<rect x="706.0" y="766.0" width="2.0" height="13.0" fill="#505050"/>
<rect x="710.0" y="766.0" width="2.0" height="13.0" fill="#505050"/>
<rect x="629.3" y="775.5" width="39.2" height="20.5" fill="#000000"/>
<rect x="630.5" y="776.8" width="36.8" height="18.0" fill="#48f048"/>
<rect x="632.0" y="778.2" width="33.6" height="15.0" fill="#000000"/>
<rect x="633.0" y="779.2" width="31.6" height="13.0" fill="#48f048"/>
<circle cx="637.5" cy="785.5" r="3.0" fill="#000000" shape-rendering="geometricPrecision"/>
<rect x="636.5" y="781.0" width="2.0" height="2.0" fill="#000000"/>
<circle cx="649.5" cy="785.5" r="3.0" fill="#000000" shape-rendering="geometricPrecision"/>
<rect x="648.5" y="781.0" width="2.0" height="2.0" fill="#000000"/>
<circle cx="661.0" cy="785.5" r="3.0" fill="#000000" shape-rendering="geometricPrecision"/>
<rect x="660.0" y="781.0" width="2.0" height="2.0" fill="#000000"/>
<rect x="674.6" y="781.0" width="13.9" height="22.0" fill="url(#gsil)" stroke="#000000" stroke-width="1"/>
<rect x="714.7" y="781.0" width="13.9" height="24.0" fill="url(#gsil)" stroke="#000000" stroke-width="1"/>
<rect x="678.0" y="781.0" width="7.0" height="7.0" fill="#202020"/>
<rect x="718.0" y="781.0" width="7.0" height="7.0" fill="#202020"/>
<rect x="695.0" y="780.4" width="14.0" height="15.6" fill="#8c1414" stroke="#000000" stroke-width="1"/>
<line x1="728.0" y1="784.0" x2="750.0" y2="776.0" stroke="#000000" stroke-width="1.5"/>
<line x1="688.0" y1="796.0" x2="697.0" y2="788.0" stroke="#000000" stroke-width="1.5"/>
<rect x="657.0" y="806.0" width="36.0" height="4.0" fill="#ffffff" stroke="#000000" stroke-width="1"/>
<rect x="658.0" y="810.0" width="34.0" height="2.0" fill="#d4d4ea" stroke="#000000" stroke-width="1"/>
<rect x="666.0" y="812.0" width="10.0" height="11.0" fill="#d4d4ea" stroke="#000000" stroke-width="1"/>
<rect x="679.0" y="812.0" width="6.0" height="11.0" fill="#d4d4ea" stroke="#000000" stroke-width="1"/>
<rect x="640.5" y="797.0" width="3.5" height="26.0" fill="#ffffff"/>
<rect x="646.0" y="797.0" width="6.0" height="26.0" fill="#d4d4ea" stroke="#000000" stroke-width="1"/>
<rect x="770.0" y="756.0" width="14.0" height="6.0" fill="#d4d4ea" stroke="#000000" stroke-width="1"/>
<rect x="762.0" y="780.0" width="13.0" height="12.0" fill="#3c3c40" stroke="#000000" stroke-width="1"/>
<rect x="792.0" y="780.0" width="8.0" height="10.0" fill="#3c3c40" stroke="#000000" stroke-width="1"/>
<rect x="1012.0" y="756.5" width="100.0" height="4.5" fill="#d4d4ea" stroke="#000000" stroke-width="1"/>
<rect x="1012.0" y="761.0" width="96.0" height="3.5" fill="#000000"/>
<path d="M1034 765.500h58a14 14 0 0 1 12 6l3 20a12 12 0 0 1-12 9c-10 0-16-5-22-9l-39-19z" fill="#d8d8ee" stroke="#000" shape-rendering="geometricPrecision"/>
<circle cx="1091.8" cy="781.0" r="10.8" fill="#dcdcf0" stroke="#000000" stroke-width="1" shape-rendering="geometricPrecision"/>
<circle cx="1091.8" cy="781.0" r="1.6" fill="#ffffff" stroke="#000000" stroke-width="1" shape-rendering="geometricPrecision"/>
<line x1="1045.0" y1="772.0" x2="1085.0" y2="772.0" stroke="#000000" stroke-width="1"/>
<rect x="1072.5" y="770.0" width="2.5" height="4.5" fill="#ffffff" stroke="#000000" stroke-width="1"/>
<polygon points="1101.4,763.3 1112.4,763.3 1112.4,772.5" fill="#f6f632" stroke="#000000" stroke-width="1"/>
<rect x="1112.4" y="758.6" width="4.9" height="48.8" fill="#e4e4f4" stroke="#000000" stroke-width="1"/>
<line x1="1114.6" y1="758.6" x2="1114.6" y2="807.4" stroke="#000" stroke-width="1"/>
<polygon points="1117.3,762.0 1123.4,762.0 1123.4,782.7 1121.0,782.7 1117.3,770.0" fill="#f6f632" stroke="#000000" stroke-width="1"/>
<rect x="1123.4" y="758.6" width="3.3" height="48.8" fill="#d4d4ea" stroke="#000000" stroke-width="1"/>
<rect x="1090.4" y="801.0" width="36.3" height="4.0" fill="#d4d4ea" stroke="#000000" stroke-width="1"/>
<rect x="1092.0" y="805.0" width="34.7" height="4.6" fill="#d4d4ea" stroke="#000000" stroke-width="1"/>
<rect x="1098.0" y="809.6" width="21.5" height="13.4" fill="#d4d4ea" stroke="#000000" stroke-width="1"/>
<line x1="1106.5" y1="809.6" x2="1106.5" y2="823.0" stroke="#000" stroke-width="1"/>
<line x1="1109.0" y1="809.6" x2="1109.0" y2="823.0" stroke="#000" stroke-width="1"/>
<line x1="1115.0" y1="809.6" x2="1115.0" y2="823.0" stroke="#000" stroke-width="1"/>
<rect x="1116.0" y="809.6" width="3.5" height="13.4" fill="#50505a"/>
<rect x="1127.2" y="770.0" width="10.4" height="4.0" fill="#f08888"/>
<rect x="1132.0" y="744.0" width="1.8" height="44.0" fill="#20e040"/>
<rect x="1135.0" y="744.0" width="6.0" height="51.0" fill="#d4d4ea" stroke="#000000" stroke-width="1"/>
<rect x="1141.0" y="744.0" width="2.7" height="51.0" fill="#ffffff" stroke="#000000" stroke-width="1"/>
<rect x="1143.7" y="744.0" width="6.0" height="51.0" fill="#34343e" stroke="#000000" stroke-width="1"/>
<rect x="1145.5" y="780.0" width="1.5" height="13.0" fill="#ffffff"/>
<rect x="1127.0" y="762.0" width="4.0" height="28.0" fill="#30303a"/>
<rect x="1128.5" y="789.0" width="3.0" height="3.5" fill="#c04040"/>
<rect x="593.9" y="759.0" width="27.6" height="13.8" fill="#cfc71c" stroke="#000000" stroke-width="1"/>
<rect x="598.3" y="762.6" width="18.8" height="6.6" fill="#c8c018" stroke="#000000" stroke-width="1"/>
<rect x="744.0" y="759.0" width="27.6" height="13.8" fill="#cfc71c" stroke="#000000" stroke-width="1"/>
<rect x="748.4" y="762.6" width="18.8" height="6.6" fill="#c8c018" stroke="#000000" stroke-width="1"/>
<rect x="805.3" y="759.0" width="27.6" height="13.8" fill="#cfc71c" stroke="#000000" stroke-width="1"/>
<rect x="809.7" y="762.6" width="18.8" height="6.6" fill="#c8c018" stroke="#000000" stroke-width="1"/>
<rect x="947.3" y="759.0" width="27.6" height="13.8" fill="#cfc71c" stroke="#000000" stroke-width="1"/>
<rect x="951.7" y="762.6" width="18.8" height="6.6" fill="#c8c018" stroke="#000000" stroke-width="1"/>
<rect x="1015.2" y="759.0" width="27.6" height="13.8" fill="#cfc71c" stroke="#000000" stroke-width="1"/>
<rect x="1019.6" y="762.6" width="18.8" height="6.6" fill="#c8c018" stroke="#000000" stroke-width="1"/>
<rect x="1133.0" y="759.0" width="27.6" height="13.8" fill="#cfc71c" stroke="#000000" stroke-width="1"/>
<rect x="1137.4" y="762.6" width="18.8" height="6.6" fill="#c8c018" stroke="#000000" stroke-width="1"/>
<rect x="577.0" y="823.5" width="606.0" height="5.5" fill="#000000"/>
<rect x="640.0" y="825.6" width="50.0" height="1.2" fill="#8a8a98"/>
<rect x="700.0" y="825.6" width="60.0" height="1.2" fill="#8a8a98"/>
<rect x="845.0" y="826.0" width="145.0" height="1.0" fill="#8a8a98"/>
<rect x="1050.0" y="825.6" width="40.0" height="1.2" fill="#8a8a98"/>
<rect x="577.5" y="828.8" width="609.5" height="13.7" fill="#d4d4ea" stroke="#000000" stroke-width="1"/>
<rect x="577.5" y="828.8" width="13.9" height="13.7" fill="#4a4a52" stroke="#000000" stroke-width="1"/>
<polygon points="1187.0,829.0 1273.0,823.0 1273.0,838.0 1187.0,842.0" fill="#484850" stroke="#000000" stroke-width="1"/>
<rect x="579.0" y="844.0" width="27.0" height="3.6" fill="#d4d4ea" stroke="#000000" stroke-width="1"/>
<rect x="606.0" y="844.0" width="20.4" height="2.0" fill="#707078" stroke="#000000" stroke-width="1"/>
<rect x="598.7" y="847.6" width="5.3" height="14.4" fill="url(#gsil)" stroke="#000000" stroke-width="1"/>
<polygon points="604.0,850.0 618.0,850.0 616.0,862.0 606.0,862.0" fill="#d6d6d6" stroke="#000000" stroke-width="1"/>
<ellipse cx="616.0" cy="862.0" rx="7.4" ry="9.0" fill="#8c1818" stroke="#000000" stroke-width="1" shape-rendering="geometricPrecision"/>
<ellipse cx="613.0" cy="863.0" rx="5.5" ry="7.0" fill="#a82020" stroke="#000000" stroke-width="1" shape-rendering="geometricPrecision"/>
<rect x="597.0" y="861.0" width="9.0" height="5.0" fill="#ffffff" stroke="#000000" stroke-width="1"/>
<polygon points="589.2,873.9 592.0,867.0 611.0,866.5 613.3,873.9" fill="#8c1818" stroke="#000000" stroke-width="1"/>
<polygon points="664.0,846.0 684.0,846.0 684.0,860.0 674.0,862.0" fill="#d6d6d6" stroke="#000000" stroke-width="1"/>
<rect x="660.0" y="844.0" width="26.0" height="2.0" fill="#d4d4ea" stroke="#000000" stroke-width="1"/>
<ellipse cx="679.5" cy="858.5" rx="9.5" ry="9.5" fill="#8c1818" stroke="#000000" stroke-width="1" shape-rendering="geometricPrecision"/>
<ellipse cx="677.5" cy="859.5" rx="6.5" ry="7.0" fill="#a01c1c" stroke="#000000" stroke-width="1" shape-rendering="geometricPrecision"/>
<circle cx="676.5" cy="858.5" r="1.8" fill="#000000" shape-rendering="geometricPrecision"/>
<polygon points="669.5,868.8 671.0,863.0 691.0,861.0 693.6,868.8" fill="#8c1818" stroke="#000000" stroke-width="1"/>
<rect x="1152.0" y="843.0" width="32.0" height="4.0" fill="#d4d4ea" stroke="#000000" stroke-width="1"/>
<polygon points="1184.0,843.0 1198.0,842.0 1196.0,846.0 1184.0,847.0" fill="#606068" stroke="#000000" stroke-width="1"/>
<rect x="1167.6" y="847.0" width="5.0" height="13.0" fill="url(#gsil)" stroke="#000000" stroke-width="1"/>
<polygon points="1172.6,849.0 1187.0,849.0 1179.0,860.0 1172.6,860.0" fill="#d6d6d6" stroke="#000000" stroke-width="1"/>
<ellipse cx="1173.0" cy="863.0" rx="9.0" ry="9.5" fill="#8c1818" stroke="#000000" stroke-width="1" shape-rendering="geometricPrecision"/>
<rect x="1166.5" y="859.5" width="9.5" height="6.0" fill="#ffffff" stroke="#000000" stroke-width="1"/>
<line x1="1166.5" y1="862.5" x2="1176.0" y2="862.5" stroke="#000" stroke-width="1"/>
<polygon points="1158.0,873.0 1160.0,867.0 1181.0,866.5 1183.0,873.0" fill="#8c1818" stroke="#000000" stroke-width="1"/>
<polygon points="1231.7,843.0 1260.0,838.8 1260.0,841.5 1231.7,846.0" fill="#d4d4ea" stroke="#000000" stroke-width="1"/>
<rect x="1233.0" y="846.0" width="19.0" height="16.0" fill="#d6d6d6" stroke="#000000" stroke-width="1"/>
<ellipse cx="1240.0" cy="859.0" rx="9.0" ry="8.5" fill="#8c1818" stroke="#000000" stroke-width="1" shape-rendering="geometricPrecision"/>
<ellipse cx="1237.0" cy="857.0" rx="6.0" ry="6.0" fill="#d6d6d6" stroke="#000000" stroke-width="1" shape-rendering="geometricPrecision"/>
<circle cx="1236.0" cy="857.0" r="1.5" fill="#000000" shape-rendering="geometricPrecision"/>
<rect x="1249.0" y="854.0" width="5.0" height="7.0" fill="#ffffff" stroke="#000000" stroke-width="1"/>
<polygon points="1238.0,868.0 1242.0,861.0 1261.0,860.0 1263.0,868.0" fill="#8c1818" stroke="#000000" stroke-width="1"/>
<rect x="1223.6" y="605.8" width="13.4" height="22.2" fill="#ffffff" stroke="#000000" stroke-width="1"/>
<line x1="1233.0" y1="606.0" x2="1233.0" y2="628.0" stroke="#a8a8a8" stroke-width="1"/>
<rect x="1238.5" y="605.8" width="1.5" height="22.2" fill="#d6d6d6"/>
<rect x="1278.0" y="605.8" width="42.0" height="13.2" fill="#20242c"/>
<rect x="1281.0" y="607.0" width="9.0" height="10.0" fill="#ffffff"/>
<rect x="1294.0" y="607.0" width="9.0" height="5.0" fill="#d6d6d6"/>
<rect x="1306.0" y="607.0" width="10.0" height="9.0" fill="#ffffff"/>
<rect x="1292.0" y="613.0" width="3.0" height="5.0" fill="#40e040"/>
<rect x="1312.0" y="613.0" width="3.0" height="5.0" fill="#40e040"/>
<rect x="1272.6" y="618.0" width="5.4" height="6.4" fill="#ff12ff"/>
<rect x="1283.0" y="618.0" width="20.0" height="6.4" fill="#ff12ff"/>
<rect x="1306.0" y="618.0" width="10.0" height="6.4" fill="#ff12ff"/>
<rect x="1317.0" y="618.5" width="7.4" height="4.5" fill="#c010c0" stroke="#000000" stroke-width="1"/>
<polygon points="1204.5,631.0 1229.0,630.2 1262.0,626.6 1334.0,626.6 1334.0,628.8 1204.5,633.8" fill="#a0a0b0" stroke="#000000" stroke-width="0.8" shape-rendering="geometricPrecision"/>
<polygon points="1204.5,631.8 1300.0,629.2 1300.0,630.4 1204.5,633.6" fill="#c4c4d0" shape-rendering="geometricPrecision"/>
<polygon points="1370.5,627.6 1383.5,626.2 1383.5,628.0 1370.5,629.6" fill="#b4b4c4" stroke="#000000" stroke-width="0.6" shape-rendering="geometricPrecision"/>
<rect x="1217.0" y="634.0" width="9.8" height="237.7" fill="#d4d4ea" stroke="#000000" stroke-width="1"/>
<rect x="1226.8" y="634.0" width="4.0" height="237.7" fill="#50505a" stroke="#000000" stroke-width="1"/>
<rect x="1274.0" y="632.0" width="10.2" height="235.3" fill="#d4d4ea" stroke="#000000" stroke-width="1"/>
<rect x="1284.2" y="632.0" width="4.0" height="235.3" fill="#50505a" stroke="#000000" stroke-width="1"/>
<rect x="1301.0" y="631.0" width="10.2" height="240.7" fill="#d4d4ea" stroke="#000000" stroke-width="1"/>
<rect x="1311.2" y="631.0" width="4.0" height="240.7" fill="#50505a" stroke="#000000" stroke-width="1"/>
<rect x="1358.7" y="653.6" width="9.6" height="213.7" fill="#d4d4ea" stroke="#000000" stroke-width="1"/>
<rect x="1368.3" y="653.6" width="4.0" height="213.7" fill="#50505a" stroke="#000000" stroke-width="1"/>
<rect x="1221.5" y="476.6" width="112.5" height="128.4" fill="#000000"/>
<rect x="1222.5" y="477.6" width="110.5" height="1.6" fill="#fc8888"/>
<rect x="1222.5" y="480.8" width="110.5" height="3.2" fill="#fc8888"/>
<rect x="1222.5" y="485.6" width="110.0" height="109.4" fill="#fc8888"/>
<rect x="1222.5" y="596.6" width="110.5" height="3.4" fill="#fc8888"/>
<rect x="1222.5" y="601.4" width="110.5" height="2.8" fill="#fc8888"/>
<polygon points="1334.0,476.6 1334.0,474.8 1370.5,474.4 1370.5,484.6 1342.6,484.6" fill="#6a2828" stroke="#000000" stroke-width="1"/>
<line x1="1336.0" y1="479.0" x2="1370.0" y2="477.5" stroke="#c07070" stroke-width="1"/>
<line x1="1340.0" y1="482.0" x2="1370.0" y2="480.6" stroke="#c07070" stroke-width="1"/>
<rect x="1334.0" y="478.0" width="8.8" height="175.6" fill="#000000"/>
<rect x="1335.0" y="484.6" width="2.4" height="160.4" fill="#fc8888"/>
<rect x="1338.8" y="484.6" width="3.0" height="160.4" fill="#fc8888"/>
<rect x="1342.8" y="484.6" width="27.7" height="160.4" fill="#000000"/>
<polygon points="1345.5,487.0 1367.0,484.6 1367.0,645.0 1345.5,645.0" fill="#585858"/>
<polygon points="1347.0,497.0 1365.5,493.0 1365.5,640.0 1347.0,640.0" fill="#5e5e5e" stroke="#000000" stroke-width="1"/>
<rect x="1364.0" y="494.0" width="1.4" height="9.0" fill="#ffffff"/>
<rect x="1343.5" y="509.0" width="5.5" height="14.0" fill="#8c1818" stroke="#000000" stroke-width="1"/>
<rect x="1360.0" y="548.0" width="4.0" height="29.0" fill="#202020"/>
<rect x="1365.4" y="578.0" width="1.2" height="62.0" fill="#ffffff"/>
<rect x="1334.0" y="645.0" width="36.5" height="8.6" fill="#6a2828" stroke="#000000" stroke-width="1"/>
<line x1="1343.0" y1="648.0" x2="1370.0" y2="648.0" stroke="#a05050" stroke-width="1"/>
<line x1="1343.0" y1="651.0" x2="1370.0" y2="651.0" stroke="#a05050" stroke-width="1"/>
<rect x="1334.6" y="645.0" width="8.0" height="8.0" fill="#fc8888" stroke="#000000" stroke-width="1"/>
<line x1="1335.0" y1="646.0" x2="1342.0" y2="652.0" stroke="#000000" stroke-width="1"/>
<line x1="1342.0" y1="646.0" x2="1335.0" y2="652.0" stroke="#000000" stroke-width="1"/>
<rect x="983.6" y="843.0" width="2.0" height="19.0" fill="#20a4b4"/>
<polygon points="980.8,859.5 988.4,859.5 984.6,869.0" fill="#20a4b4"/>
<text x="980" y="880.6" font-family="Liberation Sans,sans-serif" font-size="12.5" fill="#f01010">Z</text>
<rect x="119.0" y="941.0" width="2.6" height="59.0" fill="#10e4e4"/>
<line x1="118.6" y1="941.0" x2="118.6" y2="1000.0" stroke="#108080" stroke-width="1"/>
<rect x="124.0" y="943.0" width="20.4" height="24.0" fill="#5f7497" stroke="#c8c8c8" stroke-width="1"/>
<rect x="121.0" y="940.4" width="39.0" height="1.8" fill="#20e020"/>
<polygon points="157.0,937.6 168.6,941.3 157.0,945.0" fill="#18c418"/>
<polygon points="123.0,937.0 133.0,937.0 126.0,945.0" fill="#f01818"/>
<circle cx="119.6" cy="941.5" r="3.4" fill="#707070" stroke="#404040" stroke-width="1" shape-rendering="geometricPrecision"/>
<text x="170.5" y="946" font-family="Liberation Sans,sans-serif" font-size="11.5" fill="#c0c8d4">Y</text>
<g shape-rendering="geometricPrecision" fill="url(#gwm)" opacity="0.96">
<path d="M891.4 519v20h2.300v-18.300zM894.700 513.500v24.500h2.500v-26.500zM899 510v25.500h2.800v-27.800z"/>
<path d="M936 519v20h-2.300v-18.300zM932.600 513.500v24.500h-2.500v-26.500zM928.300 510v25.500h-2.800v-27.800z"/>
<path d="M891.600 537.600h12.500l6 -2.600v1.600l-6 2.800h-12.500zM935.800 537.600h-14l-7.500 -2.600v1.600l7.500 2.800h14zM897 535.400l8 0l4.500 -2v1.100l-4.500 2h-8zM930.300 535.400l-8.500 0l-5.500 -2v1.100l5.500 2h8.500z"/>
<path d="M914 510.500C905 511.500 902.800 522 906.500 528.500C909.500 533.500 916.500 535 920.500 530.500C923 527.500 923 522 921.200 519C921.600 524 919 529.500 914.500 530C909.500 530.500 906.500 524.500 908 518.500C909 514.500 911.500 512 914 510.500z"/>
<path d="M908.800 520.500L914.800 513.500L915.600 523.500L919.800 519L914.600 531.500L913.400 522.200z"/>
</g>
<text x="947" y="528.600" font-family="Liberation Sans,Noto Sans CJK SC,sans-serif" font-size="16.400" font-weight="500" fill="url(#gwm)" shape-rendering="geometricPrecision" textLength="82" lengthAdjust="spacingAndGlyphs">智造资料网</text>
<text x="947.400" y="538.200" font-family="Liberation Sans,sans-serif" font-weight="bold" font-style="italic" font-size="4.600" fill="#f07a1c" textLength="81.400" lengthAdjust="spacingAndGlyphs">INTELLIGENT MANUFACTURING DATA</text>
</svg>
<svg class="abs" style="left:0;top:0" width="1920" height="1048" viewBox="0 0 1920 1048">
<defs>
<linearGradient id="idoc" x1="0" y1="0" x2="1" y2="1"><stop offset="0" stop-color="#fff"/><stop offset="1" stop-color="#a9c3f0"/></linearGradient>
<linearGradient id="ifol" x1="0" y1="0" x2="0" y2="1"><stop offset="0" stop-color="#fbe9a4"/><stop offset="1" stop-color="#eec150"/></linearGradient>
<linearGradient id="icyl" x1="0" y1="0" x2="1" y2="0"><stop offset="0" stop-color="#2c56a8"/><stop offset=".4" stop-color="#7ea6e4"/><stop offset="1" stop-color="#1c3c84"/></linearGradient>
<linearGradient id="icyl2" x1="0" y1="0" x2="1" y2="0"><stop offset="0" stop-color="#a8bce0"/><stop offset=".4" stop-color="#e6eefa"/><stop offset="1" stop-color="#9cb0d8"/></linearGradient>
<linearGradient id="igray" x1="0" y1="0" x2="1" y2="1"><stop offset="0" stop-color="#d8d8d8"/><stop offset="1" stop-color="#6c6c6c"/></linearGradient>
<radialGradient id="iglobe" cx=".35" cy=".35" r=".7"><stop offset="0" stop-color="#6aa8ff"/><stop offset="1" stop-color="#0a2a8a"/></radialGradient>
</defs>
<rect x="2" y="3" width="16" height="16" fill="#6dbf3b"/><path d="M5.6 8.2L9.3 16.2h1.6L15.2 6h-2.3l-2.8 7.2L8 8.2z" fill="#fff"/><circle cx="6.8" cy="6.2" r="1.1" fill="#fff"/>
<rect x="20" y="6" width="1" height="13" fill="#9a9a9a"/>
<g transform="translate(39.5,12)"><path d="M-6 -8h8l4 4v12h-12z" fill="url(#idoc)" stroke="#000" stroke-width="1.3"/><path d="M2 -8v4h4" fill="#fff" stroke="#000" stroke-width=".9"/></g>
<g transform="translate(63.5,13)"><g transform="translate(-0.5,1) scale(1)"><path d="M-8 -4h5l1.5 1.6H6V7H-8z" fill="#e6b94a" stroke="#b88a24" stroke-width=".6"/><path d="M-8 7L-5 -.5H9L6 7z" fill="url(#ifol)" stroke="#c49a34" stroke-width=".6"/></g><path d="M-3 -2Q-2 -8 4 -7.5L4 -9.5L9.5 -5L4 -1.5V-3.6Q0 -4 -1 -.5z" fill="#2cb41e" stroke="#187a10" stroke-width=".5"/></g>
<g transform="translate(88,12)"><g transform="translate(-5,-4) scale(0.55)"><path d="M-8 -4h5l1.5 1.6H6V7H-8z" fill="#e6b94a" stroke="#b88a24" stroke-width=".6"/><path d="M-8 7L-5 -.5H9L6 7z" fill="url(#ifol)" stroke="#c49a34" stroke-width=".6"/></g><g transform="translate(-5,4.5) scale(0.55)"><path d="M-8 -4h5l1.5 1.6H6V7H-8z" fill="#e6b94a" stroke="#b88a24" stroke-width=".6"/><path d="M-8 7L-5 -.5H9L6 7z" fill="url(#ifol)" stroke="#c49a34" stroke-width=".6"/></g><rect x="-2" y="-7" width="6" height="14" fill="none" stroke="#5ed246" stroke-width="1"/><path d="M0 -4h5.5l3 3v8H0z" fill="url(#idoc)" stroke="#222" stroke-width=".9"/></g>
<g transform="translate(112,12)"><g transform="translate(0,0) scale(1)"><rect x="-8" y="-8" width="16" height="16" rx="1" fill="#4868ae" stroke="#2c4684" stroke-width=".8"/><rect x="-5.5" y="-7.2" width="11" height="8.4" fill="#f2f2f2"/><rect x="-5.5" y="-7.2" width="11" height="1.8" fill="#e23a2a"/><path d="M-4.5 -3.6h9M-4.5 -1.8h9M-4.5 0h9" stroke="#b8b8b8" stroke-width=".7"/><rect x="-4.5" y="3" width="9" height="5" fill="#2a2a2a"/><rect x="-.5" y="3.6" width="3.6" height="3.8" fill="#bdbdbd"/><rect x="-3.4" y="3.6" width="1.3" height="3.8" fill="#e8e8e8"/></g></g>
<g transform="translate(136.5,12)"><g transform="translate(3.4,-3.2) scale(0.68)"><rect x="-8" y="-8" width="16" height="16" rx="1" fill="#4868ae" stroke="#2c4684" stroke-width=".8"/><rect x="-5.5" y="-7.2" width="11" height="8.4" fill="#f2f2f2"/><rect x="-5.5" y="-7.2" width="11" height="1.8" fill="#e23a2a"/><path d="M-4.5 -3.6h9M-4.5 -1.8h9M-4.5 0h9" stroke="#b8b8b8" stroke-width=".7"/><rect x="-4.5" y="3" width="9" height="5" fill="#2a2a2a"/><rect x="-.5" y="3.6" width="3.6" height="3.8" fill="#bdbdbd"/><rect x="-3.4" y="3.6" width="1.3" height="3.8" fill="#e8e8e8"/></g><g transform="translate(-3.2,3.4) scale(0.68)"><rect x="-8" y="-8" width="16" height="16" rx="1" fill="#4868ae" stroke="#2c4684" stroke-width=".8"/><rect x="-5.5" y="-7.2" width="11" height="8.4" fill="#f2f2f2"/><rect x="-5.5" y="-7.2" width="11" height="1.8" fill="#e23a2a"/><path d="M-4.5 -3.6h9M-4.5 -1.8h9M-4.5 0h9" stroke="#b8b8b8" stroke-width=".7"/><rect x="-4.5" y="3" width="9" height="5" fill="#2a2a2a"/><rect x="-.5" y="3.6" width="3.6" height="3.8" fill="#bdbdbd"/><rect x="-3.4" y="3.6" width="1.3" height="3.8" fill="#e8e8e8"/></g></g>
<g transform="translate(159,12)"><g transform="translate(-4.5,-4) scale(0.66)"><rect x="-8" y="-8" width="16" height="16" rx="1" fill="#4868ae" stroke="#2c4684" stroke-width=".8"/><rect x="-5.5" y="-7.2" width="11" height="8.4" fill="#f2f2f2"/><rect x="-5.5" y="-7.2" width="11" height="1.8" fill="#e23a2a"/><path d="M-4.5 -3.6h9M-4.5 -1.8h9M-4.5 0h9" stroke="#b8b8b8" stroke-width=".7"/><rect x="-4.5" y="3" width="9" height="5" fill="#2a2a2a"/><rect x="-.5" y="3.6" width="3.6" height="3.8" fill="#bdbdbd"/><rect x="-3.4" y="3.6" width="1.3" height="3.8" fill="#e8e8e8"/></g><path d="M1 -3Q3 -8 8 -5.5L8.6 -7.6L10.5 -2.6L5.2 -2l1.4-1.7Q4.4 -5 3 -2.4z" fill="#2cb41e"/><path d="M0 1.5L4 -.5L10 1V7L5.5 9.5L0 7.5z" fill="#8c8c8c" stroke="#444" stroke-width=".5"/><path d="M0 1.5L5.5 3.4L10 1M5.5 3.4V9.5" stroke="#444" stroke-width=".5" fill="none"/><path d="M0 1.5L4 -.5L10 1L5.5 3.4z" fill="#c4c4c4"/></g>
<g transform="translate(184,12)"><rect x="-5.5" y="-8.5" width="11" height="9" fill="#b7cdf2" stroke="#4a5f8a" stroke-width=".8"/><path d="M0 -9.5L3 -6H1.2v2.6h-2.4V-6H-3z" fill="#1fc41f"/><path d="M-8.5 1.5L-6.5 -1.5h13l2 3v6h-17z" fill="#e6e6e6" stroke="#666" stroke-width=".8"/><rect x="-8.5" y="3.4" width="17" height="2" fill="#9a9a9a"/><rect x="-7.5" y="6" width="15" height="2" fill="#fafafa" stroke="#777" stroke-width=".5"/></g>
<g transform="translate(207,12)"><circle cx="0" cy="-.5" r="9.6" fill="#5aa62c" stroke="#3c7a1a" stroke-width=".8"/><path d="M3 3L9.2 9" stroke="#999" stroke-width="3.2" stroke-linecap="round"/><path d="M3 3L9.2 9" stroke="#e4e4e4" stroke-width="1.2" stroke-linecap="round"/><circle cx="-1" cy="-1.5" r="5.8" fill="#b7d0ea" stroke="#8c9cb0" stroke-width="1.5"/><circle cx="-1" cy="-1.5" r="3.6" fill="#d8e6f6"/><path d="M2.5 -7L6 -8.5L5 -4.5z" fill="#a8a8a8"/></g>
<g transform="translate(232,12)"><g transform="translate(0,0) scale(1,1)"><ellipse cx="0" cy="8.6" rx="7.5" ry="1.5" fill="#000" opacity=".18"/><path d="M-8 -3.2L-1.5 -9v3.6Q7.5 -5.4 7 2.5Q6.4 7.4 1.5 8.4Q4.8 4.6 3 1.4Q1.6 -.6 -1.5 -.4V3.2z" fill="#b4b4b4" stroke="#7c7c7c" stroke-width=".7"/></g></g>
<g transform="translate(255,12)"><g transform="translate(0,0) scale(-1,1)"><ellipse cx="0" cy="8.6" rx="7.5" ry="1.5" fill="#000" opacity=".18"/><path d="M-8 -3.2L-1.5 -9v3.6Q7.5 -5.4 7 2.5Q6.4 7.4 1.5 8.4Q4.8 4.6 3 1.4Q1.6 -.6 -1.5 -.4V3.2z" fill="#b4b4b4" stroke="#7c7c7c" stroke-width=".7"/></g></g>
<g transform="translate(279,12)"><g transform="translate(1.5,-0.5) scale(1,1)"><ellipse cx="0" cy="8.6" rx="7.5" ry="1.5" fill="#000" opacity=".18"/><path d="M-8 -3.2L-1.5 -9v3.6Q7.5 -5.4 7 2.5Q6.4 7.4 1.5 8.4Q4.8 4.6 3 1.4Q1.6 -.6 -1.5 -.4V3.2z" fill="#4a86d8" stroke="#2858a8" stroke-width=".7"/></g><path d="M-8.6 0h6.4v1.2Q-2.6 3.4 -4.6 4.6Q-2.6 5.8 -2.2 8.4V9.6h-6.4V8.4Q-8.2 5.8 -6.2 4.6Q-8.2 3.4 -8.6 1.2z" fill="#c8a84c" stroke="#6e5412" stroke-width=".9"/><path d="M-7 8.4Q-5.4 6 -3.8 8.4z" fill="#8a6a1c"/></g>
<rect x="295.5" y="8.6" width="6.6" height="1.3" fill="#000"/><path d="M295.5 11.6h6.6l-3.3 3.4z" fill="#000"/>
<rect x="312" y="6" width="1" height="13" fill="#a0a0a0"/>
<path d="M1799.5 10.5h10" stroke="#000" stroke-width="1"/>
<path d="M1844.5 8.5h7v7h-7zM1846.5 8.5v-2h7v7h-2" fill="none" stroke="#000" stroke-width="1"/>
<path d="M1890 5.5l10 10M1900 5.500l-10 10" stroke="#000" stroke-width="1.1"/>
<path d="M1870.500 36.500h8" stroke="#8c8c8c" stroke-width="1"/><path d="M1888.500 30.500h5v5h-5zM1890.500 30.500v-2h5v5h-2" fill="none" stroke="#8c8c8c" stroke-width="1"/><path d="M1907 28.500l8 8M1915 28.500l-8 8" stroke="#8c8c8c" stroke-width="1"/>
<g transform="translate(33,78)"><g transform="translate(0,0) scale(1)"><path d="M-9 -6.5L-1 -8.5L3 -6.500L-5 -4.5z" fill="#7c8cf0" stroke="#4856b8" stroke-width=".5"/><path d="M-9 -4L-1 -6L3 -4L-5 -2z" fill="#dfe3f4" stroke="#777" stroke-width=".5"/><path d="M-9 -1.5L-1 -3.5L3 -1.5L-5 .5z" fill="#e8e8e8" stroke="#666" stroke-width=".5"/><ellipse cx="1" cy="4.5" rx="7.5" ry="4.4" fill="#c89468" stroke="#7a5030" stroke-width=".7"/><circle cx="-2.6" cy="5.2" r="1.7" fill="#1c4ce0"/><circle cx="1.6" cy="6" r="1.7" fill="#18b418"/><circle cx="4.5" cy="3.2" r="1.7" fill="#e02424"/><path d="M-1.5 3L8.5 -8" stroke="#b4661c" stroke-width="1.6"/><path d="M-2.8 4.6L0 1.400" stroke="#555" stroke-width="1.800"/></g></g>
<g transform="translate(58,78)"><path d="M-2 -9h8l3 3v9h-11z" fill="url(#idoc)" stroke="#222" stroke-width="1"/><path d="M-7 -5h8l3 3v9h-11z" fill="url(#idoc)" stroke="#222" stroke-width="1"/><g transform="translate(-1,5.5) scale(0.95)"><path d="M-9.5 1.5Q-4 -4.5 3 -4.2Q8 -3.4 10 .5Q5 3.5 -1 3.5Q-6 3.5 -9.5 1.5z" fill="#93a4c4"/><circle cx=".5" cy="-1" r="3.4" fill="#3f5c96"/><circle cx=".5" cy="-.8" r="1.8" fill="#101a34"/><circle cx="-.6" cy="-2" r=".7" fill="#c8d6ee"/><path d="M-9.5 1Q-3 -6 4 -5.2Q8.5 -4.2 10.5 -.2" stroke="#1c2742" stroke-width="2.1" fill="none"/><path d="M-9.5 1.5Q-2 5 10 .5" stroke="#7a6a7a" stroke-width=".7" fill="none"/></g></g>
<g transform="translate(84,78)"><g transform="translate(0,-2) scale(1)"><path d="M-9.5 1.5Q-4 -4.5 3 -4.2Q8 -3.4 10 .5Q5 3.5 -1 3.5Q-6 3.5 -9.5 1.5z" fill="#93a4c4"/><circle cx=".5" cy="-1" r="3.4" fill="#3f5c96"/><circle cx=".5" cy="-.8" r="1.8" fill="#101a34"/><circle cx="-.6" cy="-2" r=".7" fill="#c8d6ee"/><path d="M-9.5 1Q-3 -6 4 -5.2Q8.5 -4.2 10.5 -.2" stroke="#1c2742" stroke-width="2.1" fill="none"/><path d="M-9.5 1.5Q-2 5 10 .5" stroke="#7a6a7a" stroke-width=".7" fill="none"/></g><path transform="translate(-5.5,5.5) scale(1)" d="M-1.2 -4h2.4v2.8H4v2.4H1.2V4h-2.4V1.2H-4v-2.4h2.8z" fill="#6fdc2c" stroke="#3f9a14" stroke-width=".4"/><g transform="translate(5,5)"><path d="M-3 4L2.5 -2.5" stroke="#3a78d2" stroke-width="1.5"/><path d="M-.5 -3.5Q4.5 -5 4.5 -.5Q4.5 3 1 3.5" stroke="#3a78d2" stroke-width="1.6" fill="none"/><path d="M-2 -4.5l3.2 -.4l-1 3z" fill="#3a78d2"/></g></g>
<g transform="translate(110,78)"><g transform="translate(0,-2) scale(1)"><path d="M-9.5 1.5Q-4 -4.5 3 -4.2Q8 -3.4 10 .5Q5 3.5 -1 3.5Q-6 3.5 -9.5 1.5z" fill="#93a4c4"/><circle cx=".5" cy="-1" r="3.4" fill="#3f5c96"/><circle cx=".5" cy="-.8" r="1.8" fill="#101a34"/><circle cx="-.6" cy="-2" r=".7" fill="#c8d6ee"/><path d="M-9.5 1Q-3 -6 4 -5.2Q8.5 -4.2 10.5 -.2" stroke="#1c2742" stroke-width="2.1" fill="none"/><path d="M-9.5 1.5Q-2 5 10 .5" stroke="#7a6a7a" stroke-width=".7" fill="none"/></g><rect x="-9.0" y="5.3" width="7" height="2.4" fill="#f4e400" stroke="#a89c00" stroke-width=".4"/><g transform="translate(5,5)"><path d="M-3 4L2.5 -2.5" stroke="#3a78d2" stroke-width="1.5"/><path d="M-.5 -3.5Q4.5 -5 4.5 -.5Q4.5 3 1 3.5" stroke="#3a78d2" stroke-width="1.6" fill="none"/><path d="M-2 -4.5l3.2 -.4l-1 3z" fill="#3a78d2"/></g></g>
<g transform="translate(136,78)"><g transform="translate(0,-4) scale(0.9)"><path d="M-9.5 1.5Q-4 -4.5 3 -4.2Q8 -3.4 10 .5Q5 3.5 -1 3.5Q-6 3.5 -9.5 1.5z" fill="#93a4c4"/><circle cx=".5" cy="-1" r="3.4" fill="#3f5c96"/><circle cx=".5" cy="-.8" r="1.8" fill="#101a34"/><circle cx="-.6" cy="-2" r=".7" fill="#c8d6ee"/><path d="M-9.5 1Q-3 -6 4 -5.2Q8.5 -4.2 10.5 -.2" stroke="#1c2742" stroke-width="2.1" fill="none"/><path d="M-9.5 1.5Q-2 5 10 .5" stroke="#7a6a7a" stroke-width=".7" fill="none"/></g><g transform="translate(-6,3.5)"><rect x="-3.2" y="-6" width="6.4" height="12" rx="1.6" fill="#111"/><circle cx="0" cy="-2.8" r="2.1" fill="#f4c010"/><circle cx="0" cy="2.8" r="2.1" fill="#18d018"/></g><g transform="translate(6,3.5)"><rect x="-3.2" y="-6" width="6.4" height="12" rx="1.6" fill="#111"/><circle cx="0" cy="-2.8" r="2.1" fill="#e81818"/><circle cx="0" cy="2.8" r="2.1" fill="#f4c010"/></g></g>
<g transform="translate(162,78)"><g transform="translate(0,-2.5) scale(1)"><path d="M-9.5 1.5Q-4 -4.5 3 -4.2Q8 -3.4 10 .5Q5 3.5 -1 3.5Q-6 3.5 -9.5 1.5z" fill="#93a4c4"/><circle cx=".5" cy="-1" r="3.4" fill="#3f5c96"/><circle cx=".5" cy="-.8" r="1.8" fill="#101a34"/><circle cx="-.6" cy="-2" r=".7" fill="#c8d6ee"/><path d="M-9.5 1Q-3 -6 4 -5.2Q8.5 -4.2 10.5 -.2" stroke="#1c2742" stroke-width="2.1" fill="none"/><path d="M-9.5 1.5Q-2 5 10 .5" stroke="#7a6a7a" stroke-width=".7" fill="none"/></g><g transform="translate(0,3.5) scale(0.95)"><path d="M-7 0A7 6 0 0 1 5 -4.5L7 -7V0H0l2.5 -2.5A4 3.4 0 0 0 -3.6 0z" fill="#4cb828" stroke="rgba(0,0,0,.35)" stroke-width=".5"/><path d="M7 1A7 6 0 0 1 -5 5.5L-7 8V1H0l-2.5 2.5A4 3.4 0 0 0 3.6 1z" fill="#e4d414" stroke="rgba(0,0,0,.35)" stroke-width=".5"/></g></g>
<g transform="translate(188,78)"><g transform="translate(0,-2.5) scale(1)"><path d="M-9.5 1.5Q-4 -4.5 3 -4.2Q8 -3.4 10 .5Q5 3.5 -1 3.5Q-6 3.5 -9.5 1.5z" fill="#93a4c4"/><circle cx=".5" cy="-1" r="3.4" fill="#3f5c96"/><circle cx=".5" cy="-.8" r="1.8" fill="#101a34"/><circle cx="-.6" cy="-2" r=".7" fill="#c8d6ee"/><path d="M-9.5 1Q-3 -6 4 -5.2Q8.5 -4.2 10.5 -.2" stroke="#1c2742" stroke-width="2.1" fill="none"/><path d="M-9.5 1.5Q-2 5 10 .5" stroke="#7a6a7a" stroke-width=".7" fill="none"/></g><path transform="translate(-6,3.5) scale(0.9)" d="M-1.2 -4h2.4v2.8H4v2.4H1.2V4h-2.4V1.2H-4v-2.4h2.8z" fill="#6fdc2c" stroke="#3f9a14" stroke-width=".4"/><path d="M-4 9L3 1" stroke="#222" stroke-width="1.3"/><rect x="1.5" y="5.8" width="7" height="2.4" fill="#f4e400" stroke="#a89c00" stroke-width=".4"/></g>
<g transform="translate(214,78)"><g transform="translate(0,-2.5) scale(1)"><path d="M-9.5 1.5Q-4 -4.5 3 -4.2Q8 -3.4 10 .5Q5 3.5 -1 3.5Q-6 3.5 -9.5 1.5z" fill="#93a4c4"/><circle cx=".5" cy="-1" r="3.4" fill="#3f5c96"/><circle cx=".5" cy="-.8" r="1.8" fill="#101a34"/><circle cx="-.6" cy="-2" r=".7" fill="#c8d6ee"/><path d="M-9.5 1Q-3 -6 4 -5.2Q8.5 -4.2 10.5 -.2" stroke="#1c2742" stroke-width="2.1" fill="none"/><path d="M-9.5 1.5Q-2 5 10 .5" stroke="#7a6a7a" stroke-width=".7" fill="none"/></g><path transform="translate(2,6) scale(1.15)" d="M-1.2 -4h2.4v2.8H4v2.4H1.2V4h-2.4V1.2H-4v-2.4h2.8z" fill="#6fdc2c" stroke="#3f9a14" stroke-width=".4"/></g>
<g transform="translate(240,78)"><g transform="translate(0,-2.5) scale(1)"><path d="M-9.5 1.5Q-4 -4.5 3 -4.2Q8 -3.4 10 .5Q5 3.5 -1 3.5Q-6 3.5 -9.5 1.5z" fill="#93a4c4"/><circle cx=".5" cy="-1" r="3.4" fill="#3f5c96"/><circle cx=".5" cy="-.8" r="1.8" fill="#101a34"/><circle cx="-.6" cy="-2" r=".7" fill="#c8d6ee"/><path d="M-9.5 1Q-3 -6 4 -5.2Q8.5 -4.2 10.5 -.2" stroke="#1c2742" stroke-width="2.1" fill="none"/><path d="M-9.5 1.5Q-2 5 10 .5" stroke="#7a6a7a" stroke-width=".7" fill="none"/></g><rect x="-1.5" y="4.8" width="9" height="2.4" fill="#f4e400" stroke="#a89c00" stroke-width=".4"/></g>
<g transform="translate(283,78)"><g transform="translate(0,0) scale(1.15)"><path d="M-7 0A7 6 0 0 1 5 -4.5L7 -7V0H0l2.5 -2.5A4 3.4 0 0 0 -3.6 0z" fill="#5c96de" stroke="rgba(0,0,0,.35)" stroke-width=".5"/><path d="M7 1A7 6 0 0 1 -5 5.5L-7 8V1H0l-2.5 2.5A4 3.4 0 0 0 3.6 1z" fill="#7aaae6" stroke="rgba(0,0,0,.35)" stroke-width=".5"/></g></g>
<g transform="translate(310,78)"><g transform="translate(0,1)"><path d="M-5.6 -6.5V6.5A5.6 2.2 0 0 0 5.6 6.5V-6.5" fill="none" stroke="#222" stroke-width="1"/><path d="M-5.6 6.5A5.6 2.2 0 0 1 5.6 6.5" fill="none" stroke="#222" stroke-width="0.6"/><ellipse cx="0" cy="-6.5" rx="5.6" ry="2.2" fill="none" stroke="#222" stroke-width="1"/></g></g>
<g transform="translate(336,78)"><g transform="translate(0,1)"><path d="M-5.6 -6.5V6.5A5.6 2.2 0 0 0 5.6 6.5V-6.5" fill="none" stroke="#222" stroke-width="1"/><ellipse cx="0" cy="-6.5" rx="5.6" ry="2.2" fill="none" stroke="#222" stroke-width="1"/></g></g>
<g transform="translate(362,78)"><g transform="translate(0,1)"><path d="M-5.6 -6.5V6.5A5.6 2.2 0 0 0 5.6 6.5V-6.5" fill="none" stroke="#333" stroke-width="1"/><path d="M-5.6 6.5A5.6 2.2 0 0 1 5.6 6.5" fill="none" stroke="#333" stroke-width="0.6"/><ellipse cx="0" cy="-6.5" rx="5.6" ry="2.2" fill="none" stroke="#333" stroke-width="1"/></g><path d="M-5.6 7.5A5.6 2.2 0 0 1 5.6 7.5" stroke="#999" stroke-width=".6" fill="none"/></g>
<g transform="translate(388,78)"><g transform="translate(0,1)"><path d="M-3 8.0L9 9.0L3 4.5z" fill="#666" opacity=".55"/><path d="M-5.6 -6.5V6.5A5.6 2.2 0 0 0 5.6 6.5V-6.5" fill="url(#icyl)" stroke="#18dcf4" stroke-width="1.3"/><path d="M-5.6 6.5A5.6 2.2 0 0 1 5.6 6.5" fill="none" stroke="#18dcf4" stroke-width="0.78"/><ellipse cx="0" cy="-6.5" rx="5.6" ry="2.2" fill="#6a98e0" stroke="#18dcf4" stroke-width="1.3"/></g></g>
<g transform="translate(414,78)"><g transform="translate(0,1)"><path d="M-3 8.0L9 9.0L3 4.5z" fill="#666" opacity=".55"/><path d="M-5.6 -6.5V6.5A5.6 2.2 0 0 0 5.6 6.5V-6.5" fill="url(#icyl)" stroke="#16244c" stroke-width="1"/><path d="M-5.6 6.5A5.6 2.2 0 0 1 5.6 6.5" fill="none" stroke="#16244c" stroke-width="0.6"/><ellipse cx="0" cy="-6.5" rx="5.6" ry="2.2" fill="#5c8ad8" stroke="#16244c" stroke-width="1"/></g></g>
<g transform="translate(440,78)"><g transform="translate(0,1)"><path d="M-3 8.0L9 9.0L3 4.5z" fill="#666" opacity=".55"/><path d="M-5.6 -6.5V6.5A5.6 2.2 0 0 0 5.6 6.5V-6.5" fill="url(#icyl2)" stroke="#3cdcf0" stroke-width="1.2"/><path d="M-5.6 6.5A5.6 2.2 0 0 1 5.6 6.5" fill="none" stroke="#3cdcf0" stroke-width="0.72"/><ellipse cx="0" cy="-6.5" rx="5.6" ry="2.2" fill="#dce6f6" stroke="#3cdcf0" stroke-width="1.2"/></g></g>
<g transform="translate(466,78)"><g transform="translate(0,1)"><path d="M-3 8.0L9 9.0L3 4.5z" fill="#666" opacity=".55"/><path d="M-5.6 -6.5V6.5A5.6 2.2 0 0 0 5.6 6.5V-6.5" fill="url(#icyl2)" stroke="#56607a" stroke-width="0.9"/><path d="M-5.6 6.5A5.6 2.2 0 0 1 5.6 6.5" fill="none" stroke="#56607a" stroke-width="0.54"/><ellipse cx="0" cy="-6.5" rx="5.6" ry="2.2" fill="#dfe7f6" stroke="#56607a" stroke-width="0.9"/></g></g>
<g transform="translate(492,78)"><g transform="translate(0,1)"><path d="M-5.6 -6.5V6.5A5.6 2.2 0 0 0 5.6 6.5V-6.5" fill="#f4f4f4" stroke="#222" stroke-width="0.9"/><path d="M-5.6 6.5A5.6 2.2 0 0 1 5.6 6.5" fill="none" stroke="#222" stroke-width="0.54"/><ellipse cx="0" cy="-6.5" rx="5.6" ry="2.2" fill="#fff" stroke="#222" stroke-width="0.9"/></g><path d="M-3 -4L-1 7M-1 -3.500L2 8M1.500 -3.500L-2.500 7.500M3 -4L3.500 6.500M-4 0L4 3" stroke="#222" stroke-width=".6" fill="none"/></g>
<g transform="translate(518,78)"><g transform="translate(-4,-3)"><path d="M-3.6 -4.5V4.5A3.6 1.5 0 0 0 3.6 4.5V-4.5" fill="#f0f0f0" stroke="#444" stroke-width="0.8"/><path d="M-3.6 4.5A3.6 1.5 0 0 1 3.6 4.5" fill="none" stroke="#444" stroke-width="0.48"/><ellipse cx="0" cy="-4.5" rx="3.6" ry="1.5" fill="#fff" stroke="#444" stroke-width="0.8"/></g><g transform="translate(4.5,3)"><path d="M-4 -5.0V5.0A4 1.7 0 0 0 4 5.0V-5.0" fill="url(#icyl)" stroke="#16244c" stroke-width="0.8"/><path d="M-4 5.0A4 1.7 0 0 1 4 5.0" fill="none" stroke="#16244c" stroke-width="0.48"/><ellipse cx="0" cy="-5.0" rx="4" ry="1.7" fill="#5c8ad8" stroke="#16244c" stroke-width="0.8"/></g><path d="M1 -8Q5 -10 7 -6.500l1.500-.5l-1.500 3.800l-3.500-1.500l1.600-.6Q4 -8 1.500 -6.500z" fill="#2cb41e"/><path d="M-2 9.500Q-6 10 -7 6.500l-1.500.3l2-3.400l3 2l-1.600.5Q-5 8.500 -2.500 8z" fill="#2cb41e"/></g>
<g transform="translate(544,78)"><g transform="translate(-2.5,-1)"><path d="M-5 -5.5V5.5A5 2.2 0 0 0 5 5.5V-5.5" fill="url(#icyl)" stroke="#16244c" stroke-width="0.9"/><path d="M-5 5.5A5 2.2 0 0 1 5 5.5" fill="none" stroke="#16244c" stroke-width="0.54"/><ellipse cx="0" cy="-5.5" rx="5" ry="2.2" fill="#5c8ad8" stroke="#16244c" stroke-width="0.9"/></g><g transform="translate(4.5,4.5) scale(0.62)"><path d="M-7 0A7 6 0 0 1 5 -4.5L7 -7V0H0l2.5 -2.5A4 3.4 0 0 0 -3.6 0z" fill="#3c78d0" stroke="rgba(0,0,0,.35)" stroke-width=".5"/><path d="M7 1A7 6 0 0 1 -5 5.5L-7 8V1H0l-2.5 2.5A4 3.4 0 0 0 3.6 1z" fill="#5c96de" stroke="rgba(0,0,0,.35)" stroke-width=".5"/></g></g>
<g transform="translate(570,78)"><rect x="-8" y="-7" width="15" height="11" fill="#5a6a8a" stroke="#38445e" stroke-width=".8"/><rect x="-6.500" y="-5.500" width="12" height="8" fill="#7c90b8"/><path d="M-4 7h7l1 2h-9z" fill="#5a6a8a"/><path d="M-7 -8L7.500 7.500" stroke="#f0f0f0" stroke-width="2.600" stroke-linecap="round"/><path d="M-7 -8L7.500 7.500" stroke="#8a8a8a" stroke-width=".5"/><path d="M-6 8L4 -3" stroke="#2c6cd0" stroke-width="2.600" stroke-linecap="round"/><path d="M3 -4Q3.500 -8.500 8 -8L6 -5.500L7.500 -3.500L9.500 -5.500Q9.500 -1.500 5 -2z" fill="#e4e4e4" stroke="#777" stroke-width=".5"/></g>
<g transform="translate(612,78)"><g transform="translate(0,-2.5)"><g transform="translate(4.5,0)"><path d="M-4.5 -2.2L-1 -4.6H5L1.6 -2.2z" fill="#f4f4f4" stroke="#333" stroke-width=".7"/><path d="M-4.5 -2.2H1.6V4h-6.1z" fill="#fff" stroke="#333" stroke-width=".7"/><path d="M1.6 -2.2L5 -4.6V1.4L1.6 4z" fill="#ddd" stroke="#333" stroke-width=".7"/></g><g transform="translate(-4.5,0)"><path d="M-4.5 -2.2L-1 -4.6H5L1.6 -2.2z" fill="#ccc" stroke="#333" stroke-width=".7"/><path d="M-4.5 -2.2H1.6V4h-6.1z" fill="#999" stroke="#333" stroke-width=".7"/><path d="M1.6 -2.2L5 -4.6V1.4L1.6 4z" fill="#6a6a6a" stroke="#333" stroke-width=".7"/></g></g><path transform="translate(-6,5) scale(0.9)" d="M-1.2 -4h2.4v2.8H4v2.4H1.2V4h-2.4V1.2H-4v-2.4h2.8z" fill="#6fdc2c" stroke="#3f9a14" stroke-width=".4"/><g transform="translate(5,4.5)"><path d="M-3 4L2.5 -2.5" stroke="#3a78d2" stroke-width="1.5"/><path d="M-.5 -3.5Q4.5 -5 4.5 -.5Q4.5 3 1 3.5" stroke="#3a78d2" stroke-width="1.6" fill="none"/><path d="M-2 -4.5l3.2 -.4l-1 3z" fill="#3a78d2"/></g></g>
<g transform="translate(638,78)"><g transform="translate(0,-4)"><g transform="translate(4.5,0)"><path d="M-4.5 -2.2L-1 -4.6H5L1.6 -2.2z" fill="#f4f4f4" stroke="#333" stroke-width=".7"/><path d="M-4.5 -2.2H1.6V4h-6.1z" fill="#fff" stroke="#333" stroke-width=".7"/><path d="M1.6 -2.2L5 -4.6V1.4L1.6 4z" fill="#ddd" stroke="#333" stroke-width=".7"/></g><g transform="translate(-4.5,0)"><path d="M-4.5 -2.2L-1 -4.6H5L1.6 -2.2z" fill="#ccc" stroke="#333" stroke-width=".7"/><path d="M-4.5 -2.2H1.6V4h-6.1z" fill="#999" stroke="#333" stroke-width=".7"/><path d="M1.6 -2.2L5 -4.6V1.4L1.6 4z" fill="#6a6a6a" stroke="#333" stroke-width=".7"/></g></g><g transform="translate(-6,3.5)"><rect x="-3.2" y="-6" width="6.4" height="12" rx="1.6" fill="#111"/><circle cx="0" cy="-2.8" r="2.1" fill="#f4c010"/><circle cx="0" cy="2.8" r="2.1" fill="#18d018"/></g><g transform="translate(6,3.5)"><rect x="-3.2" y="-6" width="6.4" height="12" rx="1.6" fill="#111"/><circle cx="0" cy="-2.8" r="2.1" fill="#e81818"/><circle cx="0" cy="2.8" r="2.1" fill="#f4c010"/></g></g>
<g transform="translate(664,78)"><g transform="translate(0,-2.5)"><g transform="translate(4.5,0)"><path d="M-4.5 -2.2L-1 -4.6H5L1.6 -2.2z" fill="#f4f4f4" stroke="#333" stroke-width=".7"/><path d="M-4.5 -2.2H1.6V4h-6.1z" fill="#fff" stroke="#333" stroke-width=".7"/><path d="M1.6 -2.2L5 -4.6V1.4L1.6 4z" fill="#ddd" stroke="#333" stroke-width=".7"/></g><g transform="translate(-4.5,0)"><path d="M-4.5 -2.2L-1 -4.6H5L1.6 -2.2z" fill="#ccc" stroke="#333" stroke-width=".7"/><path d="M-4.5 -2.2H1.6V4h-6.1z" fill="#999" stroke="#333" stroke-width=".7"/><path d="M1.6 -2.2L5 -4.6V1.4L1.6 4z" fill="#6a6a6a" stroke="#333" stroke-width=".7"/></g></g><g transform="translate(0,3.5) scale(0.95)"><path d="M-7 0A7 6 0 0 1 5 -4.5L7 -7V0H0l2.5 -2.5A4 3.4 0 0 0 -3.6 0z" fill="#4cb828" stroke="rgba(0,0,0,.35)" stroke-width=".5"/><path d="M7 1A7 6 0 0 1 -5 5.5L-7 8V1H0l-2.5 2.5A4 3.4 0 0 0 3.6 1z" fill="#e4d414" stroke="rgba(0,0,0,.35)" stroke-width=".5"/></g></g>
<g transform="translate(690,78)"><g transform="translate(0,-2.5)"><g transform="translate(4.5,0)"><path d="M-4.5 -2.2L-1 -4.6H5L1.6 -2.2z" fill="#f4f4f4" stroke="#333" stroke-width=".7"/><path d="M-4.5 -2.2H1.6V4h-6.1z" fill="#fff" stroke="#333" stroke-width=".7"/><path d="M1.6 -2.2L5 -4.6V1.4L1.6 4z" fill="#ddd" stroke="#333" stroke-width=".7"/></g><g transform="translate(-4.5,0)"><path d="M-4.5 -2.2L-1 -4.6H5L1.6 -2.2z" fill="#ccc" stroke="#333" stroke-width=".7"/><path d="M-4.5 -2.2H1.6V4h-6.1z" fill="#999" stroke="#333" stroke-width=".7"/><path d="M1.6 -2.2L5 -4.6V1.4L1.6 4z" fill="#6a6a6a" stroke="#333" stroke-width=".7"/></g></g><path transform="translate(-6,3) scale(0.9)" d="M-1.2 -4h2.4v2.8H4v2.4H1.2V4h-2.4V1.2H-4v-2.4h2.8z" fill="#6fdc2c" stroke="#3f9a14" stroke-width=".4"/><path d="M-4 9.500L3 1.500" stroke="#222" stroke-width="1.300"/><rect x="1.5" y="6.3" width="7" height="2.4" fill="#f4e400" stroke="#a89c00" stroke-width=".4"/></g>
<g transform="translate(717,78)"><g transform="translate(0,1)"><path d="M-3 8.0L9 9.0L3 4.5z" fill="#666" opacity=".55"/><path d="M-5.6 -6.5V6.5A5.6 2.2 0 0 0 5.6 6.5V-6.5" fill="url(#icyl)" stroke="#16244c" stroke-width="1"/><path d="M-5.6 6.5A5.6 2.2 0 0 1 5.6 6.5" fill="none" stroke="#16244c" stroke-width="0.6"/><ellipse cx="0" cy="-6.5" rx="5.6" ry="2.2" fill="#5c8ad8" stroke="#16244c" stroke-width="1"/></g><path d="M0 -3v2.600M0 1.500v2.600M0 6v2" stroke="#111" stroke-width="1.100"/></g>
<g transform="translate(743,78)"><g transform="translate(0,1)"><path d="M-3 8.0L9 9.0L3 4.5z" fill="#666" opacity=".55"/><path d="M-5.6 -6.5V6.5A5.6 2.2 0 0 0 5.6 6.5V-6.5" fill="url(#icyl2)" stroke="#16244c" stroke-width="1"/><path d="M-5.6 6.5A5.6 2.2 0 0 1 5.6 6.5" fill="none" stroke="#16244c" stroke-width="0.6"/><ellipse cx="0" cy="-6.5" rx="5.6" ry="2.2" fill="#5c8ad8" stroke="#16244c" stroke-width="1"/></g><path d="M-1.800 -2.500V8.600M1.800 -2.500V8.600" stroke="#e4d820" stroke-width="1.300"/></g>
<g transform="translate(769,78)"><g transform="translate(-1,1)"><path d="M-3 8.0L9 9.0L3 4.5z" fill="#666" opacity=".55"/><path d="M-5.6 -6.5V6.5A5.6 2.2 0 0 0 5.6 6.5V-6.5" fill="url(#icyl2)" stroke="#30d8ec" stroke-width="1.1"/><path d="M-5.6 6.5A5.6 2.2 0 0 1 5.6 6.5" fill="none" stroke="#30d8ec" stroke-width="0.66"/><ellipse cx="0" cy="-6.5" rx="5.6" ry="2.2" fill="#e4f0fa" stroke="#30d8ec" stroke-width="1.1"/></g><path d="M-4.500 1.500L-1 6L6 -3.500L4 -5L-1.200 2.200L-3 -.2z" fill="#3cc424" stroke="#1f8a10" stroke-width=".5"/></g>
<g transform="translate(795,78)"><path d="M-10 5L-3 9.500L-6 4z" fill="#555" opacity=".6"/><g transform="translate(0,1.5)"><path d="M-5.6 -6.5V6.5A5.6 2.2 0 0 0 5.6 6.5V-6.5" fill="url(#icyl2)" stroke="#30d8ec" stroke-width="1.1"/><path d="M-5.6 6.5A5.6 2.2 0 0 1 5.6 6.5" fill="none" stroke="#30d8ec" stroke-width="0.66"/><ellipse cx="0" cy="-6.5" rx="5.6" ry="2.2" fill="#e4f0fa" stroke="#30d8ec" stroke-width="1.1"/></g><rect x="3.500" y="-9" width="5.500" height="5.500" fill="#f4d8a0" stroke="#d88a18" stroke-width="1.100"/><circle cx="6.500" cy="-6" r="1.500" fill="none" stroke="#e03c3c" stroke-width=".8"/></g>
<g transform="translate(821,78)"><g transform="translate(0,1)"><path d="M-5.6 -6.5V6.5A5.6 2.2 0 0 0 5.6 6.5V-6.5" fill="#e0ecfa" stroke="#5c9ae4" stroke-width="0.9"/><path d="M-5.6 6.5A5.6 2.2 0 0 1 5.6 6.5" fill="none" stroke="#5c9ae4" stroke-width="0.54"/><ellipse cx="0" cy="-6.5" rx="5.6" ry="2.2" fill="#eef4fc" stroke="#5c9ae4" stroke-width="0.9"/></g><path d="M-3 -4L-1 7M-1 -3.500L2 8M1.500 -3.500L-2.500 7.500M3 -4L3.500 6.500M-4 0L4 3" stroke="#5c9ae4" stroke-width=".6" fill="none"/></g>
<g transform="translate(847,78)"><path d="M-9 -4L0 -8L9 -4L0 -.5z" fill="#5c8ce4" stroke="#0c1430" stroke-width=".9"/><path d="M-9 -4L0 -.5V9.500Q-7 5 -9 -4z" fill="#2c50b4" stroke="#0c1430" stroke-width=".9"/><path d="M9 -4L0 -.5V9.500Q7 5 9 -4z" fill="#16286c" stroke="#0c1430" stroke-width=".9"/></g>
<g transform="translate(888,78)"><g transform="translate(1,-2) scale(-1.05,1.05)"><path d="M2.8 2.8L8 8" stroke="#8a8a8a" stroke-width="3" stroke-linecap="round"/><path d="M2.8 2.8L8 8" stroke="#d8d8d8" stroke-width="1.2" stroke-linecap="round"/><circle cx="-1" cy="-1" r="5.6" fill="#cfe0f4" stroke="#8c8c8c" stroke-width="1.6"/><circle cx="-1" cy="-1" r="3.4" fill="#a9c4e4" opacity=".8"/><path d="M-2.4 -3.2L1.4 -1L-2.4 1.2z" fill="#e8f0fa" stroke="#7d93b4" stroke-width=".5"/></g><g transform="translate(4.5,5) scale(1.15)"><path d="M-4 -2L0 -4L4 -2L0 0z" fill="#c8c8c8" stroke="#333" stroke-width=".5"/><path d="M-4 -2L0 0V5L-4 3z" fill="#8a8a8a" stroke="#333" stroke-width=".5"/><path d="M4 -2L0 0V5L4 3z" fill="#585858" stroke="#333" stroke-width=".5"/></g><path d="M-9 -8.500h4M-7 -10.500v4M-9 -4.500h4" stroke="#111" stroke-width=".9"/></g>
<g transform="translate(914,78)"><g transform="translate(1,-2) scale(-1.05,1.05)"><path d="M2.8 2.8L8 8" stroke="#8a8a8a" stroke-width="3" stroke-linecap="round"/><path d="M2.8 2.8L8 8" stroke="#d8d8d8" stroke-width="1.2" stroke-linecap="round"/><circle cx="-1" cy="-1" r="5.6" fill="#cfe0f4" stroke="#8c8c8c" stroke-width="1.6"/><circle cx="-1" cy="-1" r="3.4" fill="#a9c4e4" opacity=".8"/><path d="M-2.4 -3.2L1.4 -1L-2.4 1.2z" fill="#e8f0fa" stroke="#7d93b4" stroke-width=".5"/></g><g transform="translate(4.5,5) scale(1.15)"><path d="M-4 -2L0 -4L4 -2L0 0z" fill="#c8c8c8" stroke="#333" stroke-width=".5"/><path d="M-4 -2L0 0V5L-4 3z" fill="#8a8a8a" stroke="#333" stroke-width=".5"/><path d="M4 -2L0 0V5L4 3z" fill="#585858" stroke="#333" stroke-width=".5"/></g><rect x="-10" y="-10" width="3.600" height="3.600" fill="#35c81e" stroke="#1f7a10" stroke-width=".4"/><rect x="5.5" y="-10" width="3.600" height="3.600" fill="#35c81e" stroke="#1f7a10" stroke-width=".4"/><rect x="-10" y="6" width="3.600" height="3.600" fill="#35c81e" stroke="#1f7a10" stroke-width=".4"/><rect x="6.5" y="6.5" width="3.600" height="3.600" fill="#35c81e" stroke="#1f7a10" stroke-width=".4"/></g>
<g transform="translate(940,78)"><rect x="-7" y="-5.500" width="14" height="11" fill="#f4f4fa" stroke="#222" stroke-width="1"/><rect x="-10" y="-9" width="3.600" height="3.600" fill="#35c81e" stroke="#1f7a10" stroke-width=".4"/><rect x="6.4" y="-9" width="3.600" height="3.600" fill="#35c81e" stroke="#1f7a10" stroke-width=".4"/><rect x="-10" y="5.4" width="3.600" height="3.600" fill="#35c81e" stroke="#1f7a10" stroke-width=".4"/><rect x="6.4" y="5.4" width="3.600" height="3.600" fill="#35c81e" stroke="#1f7a10" stroke-width=".4"/><text x="0" y="3.300" font-family="Liberation Sans,sans-serif" font-weight="bold" font-size="8.500" text-anchor="middle" fill="#1a1a6a">1:1</text></g>
<g transform="translate(967,78)"><path d="M-5 5L5.1 -5.8" stroke="#35c81e" stroke-width="2.2"/><path d="M8 -9L1.4 -7.2L6.7 -2.3z" fill="#35c81e"/><circle cx="-6" cy="6" r="2.800" fill="#c8c8c8" stroke="#444" stroke-width=".8"/></g>
<g transform="translate(993,78)"><g transform="translate(0,0) scale(1.1) rotate(80)"><path d="M-7 0A7 6 0 0 1 5 -4.5L7 -7V0H0l2.5 -2.5A4 3.4 0 0 0 -3.6 0z" fill="#2cb41e" stroke="rgba(0,0,0,.35)" stroke-width=".5"/><path d="M7 1A7 6 0 0 1 -5 5.5L-7 8V1H0l-2.5 2.5A4 3.4 0 0 0 3.6 1z" fill="#2cb41e" stroke="rgba(0,0,0,.35)" stroke-width=".5"/></g></g>
<g transform="translate(1019,78)"><g transform="translate(0,-5.5) scale(0.95)"><path d="M-9.5 1.5Q-4 -4.5 3 -4.2Q8 -3.4 10 .5Q5 3.5 -1 3.5Q-6 3.5 -9.5 1.5z" fill="#93a4c4"/><circle cx=".5" cy="-1" r="3.4" fill="#3f5c96"/><circle cx=".5" cy="-.8" r="1.8" fill="#101a34"/><circle cx="-.6" cy="-2" r=".7" fill="#c8d6ee"/><path d="M-9.5 1Q-3 -6 4 -5.2Q8.5 -4.2 10.5 -.2" stroke="#1c2742" stroke-width="2.1" fill="none"/><path d="M-9.5 1.5Q-2 5 10 .5" stroke="#7a6a7a" stroke-width=".7" fill="none"/></g><circle cx="0" cy="3.500" r="6" fill="#f8d648" stroke="#c89a18" stroke-width=".6"/><circle cx="-2" cy="2" r=".9" fill="#5a3c0a"/><circle cx="2" cy="2" r=".9" fill="#5a3c0a"/><path d="M-3 5Q0 8 3 5" stroke="#5a3c0a" stroke-width=".8" fill="none"/></g>
<g transform="translate(1062,78)"><g transform="translate(0,1) scale(0.95)"><path d="M-9 1L0 -5L10 0L1 7z" fill="#e4ecf8" stroke="#8a98b0" stroke-width=".6"/><path d="M-3 3L-3.0 -6.4" stroke="#1e6ee0" stroke-width="1.6"/><path d="M-3 -9.5L-5.6 -5.3L-0.4 -5.3z" fill="#1e6ee0"/><path d="M-3 3L4.3 -1.4" stroke="#28b428" stroke-width="1.6"/><path d="M7 -3L2.1 -3.1L4.8 1.4z" fill="#28b428"/><path d="M-3 3L4.2 6.6" stroke="#e02020" stroke-width="1.6"/><path d="M7 8L4.4 3.8L2.1 8.5z" fill="#e02020"/><circle cx="-3" cy="3" r="1.8" fill="#e8e8e8" stroke="#666" stroke-width=".6"/></g></g>
<g transform="translate(1088,78)"><g transform="translate(4,-4) scale(0.55)"><path d="M-9 1L0 -5L10 0L1 7z" fill="#e4ecf8" stroke="#8a98b0" stroke-width=".6"/><path d="M-3 3L-3.0 -6.4" stroke="#1e6ee0" stroke-width="1.6"/><path d="M-3 -9.5L-5.6 -5.3L-0.4 -5.3z" fill="#1e6ee0"/><path d="M-3 3L4.3 -1.4" stroke="#28b428" stroke-width="1.6"/><path d="M7 -3L2.1 -3.1L4.8 1.4z" fill="#28b428"/><path d="M-3 3L4.2 6.6" stroke="#e02020" stroke-width="1.6"/><path d="M7 8L4.4 3.8L2.1 8.5z" fill="#e02020"/><circle cx="-3" cy="3" r="1.8" fill="#e8e8e8" stroke="#666" stroke-width=".6"/></g><path d="M-7 8L-2.2 2.6" stroke="#2cb41e" stroke-width="3"/><path d="M1 -1L-6.2 1.1L-0.3 6.4z" fill="#2cb41e"/><rect x="0" y="4.500" width="8.500" height="4.500" fill="#e8e8e8" stroke="#666" stroke-width=".9"/><circle cx="-6.500" cy="7.500" r="2.300" fill="#999" stroke="#444" stroke-width=".5"/></g>
<g transform="translate(1114,78)"><g transform="translate(4,-4) scale(0.55)"><path d="M-9 1L0 -5L10 0L1 7z" fill="#e4ecf8" stroke="#8a98b0" stroke-width=".6"/><path d="M-3 3L-3.0 -6.4" stroke="#1e6ee0" stroke-width="1.6"/><path d="M-3 -9.5L-5.6 -5.3L-0.4 -5.3z" fill="#1e6ee0"/><path d="M-3 3L4.3 -1.4" stroke="#28b428" stroke-width="1.6"/><path d="M7 -3L2.1 -3.1L4.8 1.4z" fill="#28b428"/><path d="M-3 3L4.2 6.6" stroke="#e02020" stroke-width="1.6"/><path d="M7 8L4.4 3.8L2.1 8.5z" fill="#e02020"/><circle cx="-3" cy="3" r="1.8" fill="#e8e8e8" stroke="#666" stroke-width=".6"/></g><path d="M-1 9L-5.9 4.1" stroke="#2cb41e" stroke-width="2.6"/><path d="M-9 1L-7.5 7.6L-2.4 2.5z" fill="#2cb41e"/><path d="M-8 -3L-3.1 1.9" stroke="#2cb41e" stroke-width="2.6"/><path d="M0 5L-1.5 -1.6L-6.6 3.5z" fill="#2cb41e"/></g>
<g transform="translate(1157,78)"><rect x="-9.500" y="-9.500" width="19" height="19" fill="#555"/><rect x="-9.0" y="-9.0" width="5.600" height="5.600" fill="#18c8f0"/><rect x="-2.8" y="-9.0" width="5.600" height="5.600" fill="#f0a010"/><rect x="3.4000000000000004" y="-9.0" width="5.600" height="5.600" fill="#10d010"/><rect x="-9.0" y="-2.8" width="5.600" height="5.600" fill="#f07810"/><rect x="-2.8" y="-2.8" width="5.600" height="5.600" fill="#9a5a10"/><rect x="3.4000000000000004" y="-2.8" width="5.600" height="5.600" fill="#f010f0"/><rect x="-9.0" y="3.4000000000000004" width="5.600" height="5.600" fill="#1010e0"/><rect x="-2.8" y="3.4000000000000004" width="5.600" height="5.600" fill="#10a010"/><rect x="3.4000000000000004" y="3.4000000000000004" width="5.600" height="5.600" fill="#8a8a8a"/></g>
<g transform="translate(1183,78)"><rect x="-7.500" y="-9.500" width="15" height="19" fill="#eef2fa" stroke="#6a7ea4" stroke-width="1"/><rect x="-5.500" y="-7.500" width="11" height="1.800" fill="#f0b010"/><rect x="-5.500" y="-4.800" width="11" height="1.200" fill="#7aa0e0"/><rect x="-5.0" y="-2.0" width="3" height="3" fill="#18c8f0"/><rect x="-1.5" y="-2.0" width="3" height="3" fill="#f0a010"/><rect x="2.0" y="-2.0" width="3" height="3" fill="#10d010"/><rect x="-5.0" y="1.5" width="3" height="3" fill="#f07810"/><rect x="-1.5" y="1.5" width="3" height="3" fill="#9a5a10"/><rect x="2.0" y="1.5" width="3" height="3" fill="#f010f0"/><rect x="-5.0" y="5.0" width="3" height="3" fill="#1010e0"/><rect x="-1.5" y="5.0" width="3" height="3" fill="#10a010"/><rect x="2.0" y="5.0" width="3" height="3" fill="#8a8a8a"/></g>
<g transform="translate(1209,78)"><circle cx="0" cy="0" r="10" fill="#5a9434" stroke="#555" stroke-width="1.200"/><g transform="translate(0,0) scale(1)"><path d="M-5.500 -5.500L5.500 5.500" stroke="#e8e8e8" stroke-width="2.600" stroke-linecap="round"/><path d="M5.500 -5.500L-5.500 5.500" stroke="#3c78d8" stroke-width="2.600" stroke-linecap="round"/><circle cx="-5" cy="-5" r="2.200" fill="#e0e0e0"/><circle cx="5" cy="-5" r="1.800" fill="#d4d4d4"/></g></g>
<g transform="translate(1235,78)"><rect x="-10" y="-9.500" width="20" height="19" fill="#b4cdf4" stroke="#3c5488" stroke-width="1"/><rect x="-10" y="-9.500" width="20" height="3.400" fill="#2c4c9c"/><path d="M-7.500 -3.500V8" stroke="#a06a20" stroke-width="2" stroke-dasharray="2 1.200"/><g transform="translate(2,2) scale(0.8)"><path d="M-5.500 -5.500L5.500 5.500" stroke="#e8e8e8" stroke-width="2.600" stroke-linecap="round"/><path d="M5.500 -5.500L-5.500 5.500" stroke="#3c78d8" stroke-width="2.600" stroke-linecap="round"/><circle cx="-5" cy="-5" r="2.200" fill="#e0e0e0"/><circle cx="5" cy="-5" r="1.800" fill="#d4d4d4"/></g></g>
<g transform="translate(1261,78)"><rect x="-9" y="-7.500" width="17" height="15" fill="none" stroke="#222" stroke-width="1.600" stroke-dasharray="1.600 1.600"/><path d="M-5 -1Q0 -8 8.500 -6.500L9.500 -1Q5 2 0 3L-3 5z" fill="#f0c078" stroke="#8a5a1c" stroke-width=".7"/><circle cx="-5.500" cy="5.500" r="2.800" fill="#f4e418" stroke="#2c50d0" stroke-width="1"/><path d="M-5.500 2.500v6M-8.500 5.500h6" stroke="#2c50d0" stroke-width=".9"/></g>
<g transform="translate(1287,78)"><path d="M-4.500 -6.500L9 -8.500L5.500 7L-9 9z" fill="#d84848" stroke="#2c58c8" stroke-width="1.800"/><path d="M-1 -7L-5 8.200M3.500 -7.700L.5 7.600M-6 -2.500L8 -4.500M-7.500 2.500L6.500 .5" stroke="#4c78d8" stroke-width=".8"/><path d="M-9 9L5.500 7L6 9L-8.500 11z" fill="#2c58c8"/></g>
<path d="M49.5 132.5h5.4l-2.7 3z" fill="#000"/>
<path d="M49.5 158.5h5.4l-2.7 3z" fill="#000"/>
<path d="M22.5 184.5h5.4l-2.7 3z" fill="#000"/>
<path d="M49.5 184.5h5.4l-2.7 3z" fill="#000"/>
<path d="M22.5 210.5h5.4l-2.7 3z" fill="#000"/>
<path d="M49.5 210.5h5.4l-2.7 3z" fill="#000"/>
<path d="M22.5 236.5h5.4l-2.7 3z" fill="#000"/>
<path d="M49.5 236.5h5.4l-2.7 3z" fill="#000"/>
<path d="M22.5 262.5h5.4l-2.7 3z" fill="#000"/>
<path d="M49.5 262.5h5.4l-2.7 3z" fill="#000"/>
<path d="M22.5 288.5h5.4l-2.7 3z" fill="#000"/>
<path d="M49.5 288.5h5.4l-2.7 3z" fill="#000"/>
<path d="M22.5 314.5h5.4l-2.7 3z" fill="#000"/>
<path d="M49.5 314.5h5.4l-2.7 3z" fill="#000"/>
<path d="M22.5 340.5h5.4l-2.7 3z" fill="#000"/>
<g transform="translate(17,143)"><path d="M-9 -5h5M-10 -2h5M-9 1h4" stroke="#9ab0d0" stroke-width="1.2"/><g transform="translate(3,-2) scale(-1.15,1.15)"><path d="M2.8 2.8L8 8" stroke="#8a8a8a" stroke-width="3" stroke-linecap="round"/><path d="M2.8 2.8L8 8" stroke="#d8d8d8" stroke-width="1.2" stroke-linecap="round"/><circle cx="-1" cy="-1" r="5.6" fill="#cfe0f4" stroke="#8c8c8c" stroke-width="1.6"/><circle cx="-1" cy="-1" r="3.4" fill="#a9c4e4" opacity=".8"/><path d="M-2.4 -3.2L1.4 -1L-2.4 1.2z" fill="#e8f0fa" stroke="#7d93b4" stroke-width=".5"/></g></g>
<g transform="translate(44,143)"><path d="M-8 -7L8 8M-8 4L7 -6" stroke="#2c5cd0" stroke-width="1.300"/><g transform="translate(0,0)"><path d="M-6 7L-4.6 3L5.4 -8L7.6 -6L-2.2 4.8z" fill="#d89a3c" stroke="#6a4410" stroke-width=".7"/><path d="M-6 7L-4.6 3L-2.2 4.8z" fill="#f4dcb0" stroke="#6a4410" stroke-width=".5"/><path d="M-6 7l.6-1.8l1.2 1z" fill="#222"/><path d="M4.2 -6.700L6.400 -4.700L7.600 -6L5.400 -8z" fill="#d83030"/></g></g>
<g transform="translate(17,169)"><g transform="translate(0,0) scale(1)"><rect x="-5.5" y="-4.5" width="11" height="9" fill="#e8eefa" stroke="#50607c" stroke-width=".8"/><rect x="-4" y="-3" width="8" height="6" fill="#fff" opacity=".7"/><path d="M-9.5 -8.5L-5.5 -8L-9 -4.8z" fill="#35c81e" stroke="#1f7a10" stroke-width=".4"/><path d="M-5.5 -4.5L-8.6 -7.6" stroke="#35c81e" stroke-width="1.6"/><path d="M9.5 -8.5L5.5 -8L9 -4.8z" fill="#35c81e" stroke="#1f7a10" stroke-width=".4"/><path d="M5.5 -4.5L8.6 -7.6" stroke="#35c81e" stroke-width="1.6"/><path d="M-9.5 8.5L-5.5 8L-9 4.8z" fill="#35c81e" stroke="#1f7a10" stroke-width=".4"/><path d="M-5.5 4.5L-8.6 7.6" stroke="#35c81e" stroke-width="1.6"/><path d="M9.5 8.5L5.5 8L9 4.8z" fill="#35c81e" stroke="#1f7a10" stroke-width=".4"/><path d="M5.5 4.5L8.6 7.6" stroke="#35c81e" stroke-width="1.6"/></g></g>
<g transform="translate(44,169)"><path d="M-8 -2Q-8 -7 -3 -5Q2 -2 4 4Q6 9 8 5Q9 1 3 2Q-6 4 -8 -2" stroke="#2c5cd0" stroke-width="1.500" fill="none"/><g transform="translate(0,-1)"><path d="M-6 7L-4.6 3L5.4 -8L7.6 -6L-2.2 4.8z" fill="#d89a3c" stroke="#6a4410" stroke-width=".7"/><path d="M-6 7L-4.6 3L-2.2 4.8z" fill="#f4dcb0" stroke="#6a4410" stroke-width=".5"/><path d="M-6 7l.6-1.8l1.2 1z" fill="#222"/><path d="M4.2 -6.700L6.400 -4.700L7.600 -6L5.400 -8z" fill="#d83030"/></g></g>
<g transform="translate(17,195)"><g transform="translate(1,-2) scale(-1.1,1.1)"><path d="M2.8 2.8L8 8" stroke="#8a8a8a" stroke-width="3" stroke-linecap="round"/><path d="M2.8 2.8L8 8" stroke="#d8d8d8" stroke-width="1.2" stroke-linecap="round"/><circle cx="-1" cy="-1" r="5.6" fill="#cfe0f4" stroke="#8c8c8c" stroke-width="1.6"/><circle cx="-1" cy="-1" r="3.4" fill="#a9c4e4" opacity=".8"/><path d="M-2.4 -3.2L1.4 -1L-2.4 1.2z" fill="#e8f0fa" stroke="#7d93b4" stroke-width=".5"/></g><g transform="translate(4.5,5) scale(1.15)"><path d="M-4 -2L0 -4L4 -2L0 0z" fill="#c8c8c8" stroke="#333" stroke-width=".5"/><path d="M-4 -2L0 0V5L-4 3z" fill="#8a8a8a" stroke="#333" stroke-width=".5"/><path d="M4 -2L0 0V5L4 3z" fill="#585858" stroke="#333" stroke-width=".5"/></g><path d="M-9.500 -8.500h4M-7.500 -10.500v4M-9.500 -4.500h4" stroke="#111" stroke-width=".9"/></g>
<g transform="translate(44,195)"><rect x="-8" y="-6.500" width="14.500" height="14.500" fill="#fffff0" stroke="#f0e000" stroke-width="1.700"/><path d="M-5 1L-1.500 5.500L7.500 -6L5.500 -8L-1.700 1.600L-3.500 -.8z" fill="#3cc424" stroke="#1f8a10" stroke-width=".5"/></g>
<g transform="translate(17,221)"><g transform="translate(0,1) scale(0.95)"><path d="M-9 1L0 -5L10 0L1 7z" fill="#e4ecf8" stroke="#8a98b0" stroke-width=".6"/><path d="M-3 3L-3.0 -6.4" stroke="#1e6ee0" stroke-width="1.6"/><path d="M-3 -9.5L-5.6 -5.3L-0.4 -5.3z" fill="#1e6ee0"/><path d="M-3 3L4.3 -1.4" stroke="#28b428" stroke-width="1.6"/><path d="M7 -3L2.1 -3.1L4.8 1.4z" fill="#28b428"/><path d="M-3 3L4.2 6.6" stroke="#e02020" stroke-width="1.6"/><path d="M7 8L4.4 3.8L2.1 8.5z" fill="#e02020"/><circle cx="-3" cy="3" r="1.8" fill="#e8e8e8" stroke="#666" stroke-width=".6"/></g></g>
<g transform="translate(44,221)"><path d="M-9 2Q-6 -9 -1 0Q3 8 8 -3" stroke="#2c5cd0" stroke-width="1.600" fill="none"/><g transform="translate(0,-1)"><path d="M-6 7L-4.6 3L5.4 -8L7.6 -6L-2.2 4.8z" fill="#d89a3c" stroke="#6a4410" stroke-width=".7"/><path d="M-6 7L-4.6 3L-2.2 4.8z" fill="#f4dcb0" stroke="#6a4410" stroke-width=".5"/><path d="M-6 7l.6-1.8l1.2 1z" fill="#222"/><path d="M4.2 -6.700L6.400 -4.700L7.600 -6L5.400 -8z" fill="#d83030"/></g></g>
<g transform="translate(17,247)"><g transform="translate(0,0) scale(1)"><path d="M-9 -6.5L-1 -8.5L3 -6.500L-5 -4.5z" fill="#7c8cf0" stroke="#4856b8" stroke-width=".5"/><path d="M-9 -4L-1 -6L3 -4L-5 -2z" fill="#dfe3f4" stroke="#777" stroke-width=".5"/><path d="M-9 -1.5L-1 -3.5L3 -1.5L-5 .5z" fill="#e8e8e8" stroke="#666" stroke-width=".5"/><ellipse cx="1" cy="4.5" rx="7.5" ry="4.4" fill="#c89468" stroke="#7a5030" stroke-width=".7"/><circle cx="-2.6" cy="5.2" r="1.7" fill="#1c4ce0"/><circle cx="1.6" cy="6" r="1.7" fill="#18b418"/><circle cx="4.5" cy="3.2" r="1.7" fill="#e02424"/><path d="M-1.5 3L8.5 -8" stroke="#b4661c" stroke-width="1.6"/><path d="M-2.8 4.6L0 1.400" stroke="#555" stroke-width="1.800"/></g></g>
<g transform="translate(44,247)"><path d="M-5 -7.500L9 -9.500L5 7L-9.500 9z" fill="#cfe2fa" stroke="#2c60d0" stroke-width="1.600"/><path d="M2 -8.500L-2 8M-7.500 1L7.500 -1.500" stroke="#2c60d0" stroke-width="1.200"/><path d="M-9.500 9L5 7l.5 1.800L-9 11z" fill="#2c60d0"/></g>
<g transform="translate(17,273)"><g transform="translate(0,0) scale(1.15)"><path d="M-7 0A7 6 0 0 1 5 -4.5L7 -7V0H0l2.5 -2.5A4 3.4 0 0 0 -3.6 0z" fill="#5c96de" stroke="rgba(0,0,0,.35)" stroke-width=".5"/><path d="M7 1A7 6 0 0 1 -5 5.5L-7 8V1H0l-2.5 2.5A4 3.4 0 0 0 3.6 1z" fill="#7aaae6" stroke="rgba(0,0,0,.35)" stroke-width=".5"/></g></g>
<g transform="translate(44,273)"><path d="M-9 -4L0 -8L9 -4L0 -.5z" fill="#c8c8c8" stroke="#333" stroke-width=".7"/><path d="M-9 -4L0 -.5V9L-9 5z" fill="#9a9a9a" stroke="#333" stroke-width=".7"/><path d="M9 -4L0 -.5V9L9 5z" fill="#5c5c5c" stroke="#333" stroke-width=".7"/></g>
<g transform="translate(17,299)"><ellipse cx="0" cy="9.500" rx="5" ry="1.200" fill="#000" opacity=".25"/><text x="0" y="7" font-family="Liberation Sans,sans-serif" font-weight="bold" font-size="21" text-anchor="middle" fill="#3c6cd0" stroke="#1c3c8c" stroke-width=".5">?</text></g>
<g transform="translate(44,299)"><path d="M-8.500 -7V9M8.500 -7V9" stroke="#111" stroke-width="1.300"/><path d="M-7 -2.500H7" stroke="#e8d800" stroke-width="1.800"/><path d="M-8 -2.500l3.500 -2.500v5zM8 -2.500l-3.500 -2.500v5z" fill="#e8d800" stroke="#555" stroke-width=".4"/></g>
<g transform="translate(17,325)"><path d="M-6.500 -4h13l-1.500 13h-10z" fill="#bcdcf0" stroke="#5a8ab0" stroke-width=".9"/><ellipse cx="0" cy="-4" rx="6.800" ry="2" fill="#dceefa" stroke="#5a8ab0" stroke-width=".9"/><path d="M-3 -1v8M0 -1v8M3 -1v8" stroke="#8ab0d0" stroke-width=".9"/><path d="M-2 -9L2 -7L0 -3z" fill="#f0d020" stroke="#444" stroke-width=".5"/></g>
<g transform="translate(44,325)"><g transform="translate(0,0) scale(1,1)"><ellipse cx="0" cy="8.6" rx="7.5" ry="1.5" fill="#000" opacity=".18"/><path d="M-8 -3.2L-1.5 -9v3.6Q7.5 -5.4 7 2.5Q6.4 7.4 1.5 8.4Q4.8 4.6 3 1.4Q1.6 -.6 -1.5 -.4V3.2z" fill="#b4b4b4" stroke="#7c7c7c" stroke-width=".7"/></g></g>
<g transform="translate(17,351)"><rect x="-9.500" y="-9" width="2.500" height="14" fill="#555"/><rect x="-9" y="-9" width="1" height="6" fill="#18c0e0"/><circle cx="1" cy="0" r="6" fill="none" stroke="#e87818" stroke-width="1.800"/><circle cx="1" cy="0" r="1.800" fill="#e87818"/><path d="M1 -9.500V9.500M-8.500 0H10.500M-5.700 -6.700L7.700 6.700M7.700 -6.700L-5.700 6.700" stroke="#8a4a10" stroke-width="1"/><path d="M-9 6.500L-2 9.500L8 6" stroke="#e87818" stroke-width="1.800" fill="none"/></g>
<g transform="translate(44,351)"><path d="M-3 -2h9l4 4v8.500h-13z" fill="#fff" stroke="#111" stroke-width="1.100"/><g transform="translate(-2,-2) scale(0.95)"><path d="M-8 -4h5l1.5 1.6H6V7H-8z" fill="#e6b94a" stroke="#b88a24" stroke-width=".6"/><path d="M-8 7L-5 -.5H9L6 7z" fill="url(#ifol)" stroke="#c49a34" stroke-width=".6"/></g><path d="M1 -7.500h5v2.500h-5z" fill="#2cb41e"/></g>
<g transform="translate(76,125)"><rect x="-9" y="-8" width="18" height="3.400" fill="#3f5a8a" stroke="#5a76a8" stroke-width=".5"/><rect x="-9" y="-1.7" width="18" height="3.400" fill="#3f5a8a" stroke="#5a76a8" stroke-width=".5"/><rect x="-9" y="4.6" width="18" height="3.400" fill="#3f5a8a" stroke="#5a76a8" stroke-width=".5"/></g>
<g transform="translate(104,125)"><g transform="translate(0,0) scale(1)"><rect x="-5.5" y="-4.5" width="11" height="9" fill="#e8eefa" stroke="#50607c" stroke-width=".8"/><rect x="-4" y="-3" width="8" height="6" fill="#fff" opacity=".7"/><path d="M-9.5 -8.5L-5.5 -8L-9 -4.8z" fill="#35c81e" stroke="#1f7a10" stroke-width=".4"/><path d="M-5.5 -4.5L-8.6 -7.6" stroke="#35c81e" stroke-width="1.6"/><path d="M9.5 -8.5L5.5 -8L9 -4.8z" fill="#35c81e" stroke="#1f7a10" stroke-width=".4"/><path d="M5.5 -4.5L8.6 -7.6" stroke="#35c81e" stroke-width="1.6"/><path d="M-9.5 8.5L-5.5 8L-9 4.8z" fill="#35c81e" stroke="#1f7a10" stroke-width=".4"/><path d="M-5.5 4.5L-8.6 7.6" stroke="#35c81e" stroke-width="1.6"/><path d="M9.5 8.5L5.5 8L9 4.8z" fill="#35c81e" stroke="#1f7a10" stroke-width=".4"/><path d="M5.5 4.5L8.6 7.6" stroke="#35c81e" stroke-width="1.6"/></g></g>
<g transform="translate(132,125)"><path d="M-9 -5h5M-10 -2h5M-9 1h4" stroke="#c8d4e8" stroke-width="1.2"/><g transform="translate(3,-2) scale(-1.1,1.1)"><path d="M2.8 2.8L8 8" stroke="#8a8a8a" stroke-width="3" stroke-linecap="round"/><path d="M2.8 2.8L8 8" stroke="#d8d8d8" stroke-width="1.2" stroke-linecap="round"/><circle cx="-1" cy="-1" r="5.6" fill="#cfe0f4" stroke="#8c8c8c" stroke-width="1.6"/><circle cx="-1" cy="-1" r="3.4" fill="#a9c4e4" opacity=".8"/><path d="M-2.4 -3.2L1.4 -1L-2.4 1.2z" fill="#e8f0fa" stroke="#7d93b4" stroke-width=".5"/></g></g>
<g transform="translate(160,125)"><path d="M-9 3L-1 -4L9 2L1 10z" fill="none" stroke="#5a5f74" stroke-width=".8"/><path d="M-1 3L-1.0 -6.4" stroke="#1e7ef0" stroke-width="2"/><path d="M-1 -10L-4.0 -5.2L2.0 -5.2z" fill="#1e7ef0"/><path d="M-1 3L5.3 -1.9" stroke="#3cc83c" stroke-width="1.8"/><path d="M8 -4L2.7 -3.5L6.2 1.0z" fill="#3cc83c"/><path d="M-1 3L4.5 7.8" stroke="#e02020" stroke-width="1.8"/><path d="M7 10L5.5 4.9L1.8 9.2z" fill="#e02020"/><circle cx="-1" cy="3" r="1.900" fill="#eee" stroke="#555" stroke-width=".5"/></g>
<g transform="translate(188,125)"><path d="M0.5 -8.9L0.5 0.2M-8.4 4.4L0.5 0.2L9.3 3.4" fill="none" stroke="#0a0a0a" stroke-width="1.2"/><polygon points="-8.9,-5 0.5,-8.9 9.7,-6.4 0,-1.4" fill="#3fd820"/><path d="M-8.9 -5L0.5 -8.9L9.7 -6.4L9.3 3.4L0 9.1L-8.4 4.4zM-8.9 -5L0 -1.4L9.7 -6.4M0 -1.4L0 9.1" fill="none" stroke="#0a0a0a" stroke-width="1.2" stroke-linejoin="round"/></g>
<g transform="translate(216,125)"><path d="M0.5 -8.9L0.5 0.2M-8.4 4.4L0.5 0.2L9.3 3.4" fill="none" stroke="#0a0a0a" stroke-width="1.2"/><polygon points="-8.4,4.4 0.5,0.2 9.3,3.4 0,9.1" fill="#35c81e"/><path d="M-8.9 -5L0.5 -8.9L9.7 -6.4L9.3 3.4L0 9.1L-8.4 4.4zM-8.9 -5L0 -1.4L9.7 -6.4M0 -1.4L0 9.1" fill="none" stroke="#0a0a0a" stroke-width="1.2" stroke-linejoin="round"/></g>
<g transform="translate(244,125)"><path d="M0.5 -8.9L0.5 0.2M-8.4 4.4L0.5 0.2L9.3 3.4" fill="none" stroke="#0a0a0a" stroke-width="1.2"/><polygon points="-8.9,-5 0.5,-8.9 0.5,0.2 -8.4,4.4" fill="#35c81e"/><path d="M-8.9 -5L0.5 -8.9L9.7 -6.4L9.3 3.4L0 9.1L-8.4 4.4zM-8.9 -5L0 -1.4L9.7 -6.4M0 -1.4L0 9.1" fill="none" stroke="#0a0a0a" stroke-width="1.2" stroke-linejoin="round"/></g>
<g transform="translate(272,125)"><path d="M0.5 -8.9L0.5 0.2M-8.4 4.4L0.5 0.2L9.3 3.4" fill="none" stroke="#0a0a0a" stroke-width="1.2"/><polygon points="0,-1.4 9.7,-6.4 9.3,3.4 0,9.1" fill="#35c81e"/><path d="M-8.9 -5L0.5 -8.9L9.7 -6.4L9.3 3.4L0 9.1L-8.4 4.4zM-8.9 -5L0 -1.4L9.7 -6.4M0 -1.4L0 9.1" fill="none" stroke="#0a0a0a" stroke-width="1.2" stroke-linejoin="round"/></g>
<g transform="translate(300,125)"><path d="M0.5 -8.9L0.5 0.2M-8.4 4.4L0.5 0.2L9.3 3.4" fill="none" stroke="#0a0a0a" stroke-width="1.2"/><polygon points="-8.9,-5 0,-1.4 0,9.1 -8.4,4.4" fill="#3fd524"/><path d="M-8.9 -5L0.5 -8.9L9.7 -6.4L9.3 3.4L0 9.1L-8.4 4.4zM-8.9 -5L0 -1.4L9.7 -6.4M0 -1.4L0 9.1" fill="none" stroke="#0a0a0a" stroke-width="1.2" stroke-linejoin="round"/></g>
<g transform="translate(328,125)"><path d="M0.5 -8.9L0.5 0.2M-8.4 4.4L0.5 0.2L9.3 3.4" fill="none" stroke="#0a0a0a" stroke-width="1.2"/><polygon points="0.5,-8.9 9.7,-6.4 9.3,3.4 0.5,0.2" fill="#35c81e"/><path d="M-8.9 -5L0.5 -8.9L9.7 -6.4L9.3 3.4L0 9.1L-8.4 4.4zM-8.9 -5L0 -1.4L9.7 -6.4M0 -1.4L0 9.1" fill="none" stroke="#0a0a0a" stroke-width="1.2" stroke-linejoin="round"/></g>
<g transform="translate(356,125)"><polygon points="-8.9,-5 0.5,-8.9 9.7,-6.4 0,-1.4" fill="#5fe83c"/><polygon points="-8.9,-5 0,-1.4 0,9.1 -8.4,4.4" fill="#3fd524"/><polygon points="0,-1.4 9.7,-6.4 9.3,3.4 0,9.1" fill="#2bb015"/><path d="M-8.9 -5L0.5 -8.9L9.7 -6.4L9.3 3.4L0 9.1L-8.4 4.4zM-8.9 -5L0 -1.4L9.7 -6.4M0 -1.4L0 9.1" fill="none" stroke="#1e8a10" stroke-width=".9"/></g>
<g transform="translate(76,153)"><g transform="translate(0,0)"><path d="M-5.6 -6.5V6.5A5.6 2.2 0 0 0 5.6 6.5V-6.5" fill="none" stroke="#1a1a1a" stroke-width="1"/><path d="M-5.6 6.5A5.6 2.2 0 0 1 5.6 6.5" fill="none" stroke="#1a1a1a" stroke-width="0.6"/><ellipse cx="0" cy="-6.5" rx="5.6" ry="2.2" fill="none" stroke="#1a1a1a" stroke-width="1"/></g><path d="M-5.6 6.5A5.6 2.2 0 0 1 5.6 6.5" stroke="#555" stroke-width=".6" fill="none"/></g>
<g transform="translate(76,181)"><g transform="translate(0,0)"><path d="M-5.6 -6.5V6.5A5.6 2.2 0 0 0 5.6 6.5V-6.5" fill="none" stroke="#1a1a1a" stroke-width="1"/><ellipse cx="0" cy="-6.5" rx="5.6" ry="2.2" fill="none" stroke="#1a1a1a" stroke-width="1"/></g></g>
<g transform="translate(76,209)"><g transform="translate(0,0)"><path d="M-5.6 -6.5V6.5A5.6 2.2 0 0 0 5.6 6.5V-6.5" fill="url(#icyl)" stroke="#16244c" stroke-width="1"/><path d="M-5.6 6.5A5.6 2.2 0 0 1 5.6 6.5" fill="none" stroke="#16244c" stroke-width="0.6"/><ellipse cx="0" cy="-6.5" rx="5.6" ry="2.2" fill="#6a98e0" stroke="#16244c" stroke-width="1"/></g></g>
<g transform="translate(76,237)"><g transform="translate(0,0)"><path d="M-5.6 -6.5V6.5A5.6 2.2 0 0 0 5.6 6.5V-6.5" fill="url(#icyl2)" stroke="#56607a" stroke-width="0.9"/><path d="M-5.6 6.5A5.6 2.2 0 0 1 5.6 6.5" fill="none" stroke="#56607a" stroke-width="0.54"/><ellipse cx="0" cy="-6.5" rx="5.6" ry="2.2" fill="#e6eefa" stroke="#56607a" stroke-width="0.9"/></g></g>
<g transform="translate(76,265)"><g transform="translate(0,0)"><path d="M-5.6 -6.5V6.5A5.6 2.2 0 0 0 5.6 6.5V-6.5" fill="none" stroke="#1a1a1a" stroke-width="0.9"/><path d="M-5.6 6.5A5.6 2.2 0 0 1 5.6 6.5" fill="none" stroke="#1a1a1a" stroke-width="0.54"/><ellipse cx="0" cy="-6.5" rx="5.6" ry="2.2" fill="none" stroke="#1a1a1a" stroke-width="0.9"/></g><path d="M-3 -5L-1 6M-1 -4.500L2 7M1.500 -4.500L-2.500 6.500M3 -5L3.500 5.500M-4 -1L4 2" stroke="#1a1a1a" stroke-width=".6" fill="none"/></g>
<g transform="translate(1190,1030.5)"><rect x="-8" y="-8.500" width="16" height="17" fill="#c4c8d8" stroke="#6a7088" stroke-width="1"/><g transform="translate(0,0) scale(0.85)"><path d="M-7 0A7 6 0 0 1 5 -4.5L7 -7V0H0l2.5 -2.5A4 3.4 0 0 0 -3.6 0z" fill="#e05068" stroke="rgba(0,0,0,.35)" stroke-width=".5"/><path d="M7 1A7 6 0 0 1 -5 5.5L-7 8V1H0l-2.5 2.5A4 3.4 0 0 0 3.6 1z" fill="#e87088" stroke="rgba(0,0,0,.35)" stroke-width=".5"/></g></g>
<g transform="translate(1221,1030.5)"><path d="M-6 -7l1.500 3l3.500-1l-2 3l2.500 2.500l-3.500.3l-.8 3.400l-2-2.800" fill="#e068c8" stroke="#b040a0" stroke-width=".5"/><path d="M-1 -2L6.500 6L3 6.300L4.800 9.500L3 10.300L1.300 7L-1 9z" fill="#e8e8e8" stroke="#555" stroke-width=".8"/></g>
<g transform="translate(1252,1030.5)"><path d="M-5 -3Q0 -8 7.500 -6.500L8.500 -2.500Q5 0 0 .5L-3 3z" fill="#f0c078" stroke="#8a5a1c" stroke-width=".7"/><rect x="-6.500" y="2" width="9" height="7.500" fill="#dfe8f8" stroke="#4c68a8" stroke-width=".6"/><path d="M-4.500 4h1.600v1.600h-1.600zM-1 4h1.600v1.600H-1zM-4.500 7h1.600v1.600h-1.600zM-1 7h1.600v1.600H-1z" fill="#2c60d0"/></g>
<g transform="translate(1283,1030.5)"><ellipse cx="0" cy="8.500" rx="4.500" ry="1" fill="#000" opacity=".25"/><text x="0" y="6.500" font-family="Liberation Sans,sans-serif" font-weight="bold" font-size="19" text-anchor="middle" fill="#4c7cd8" stroke="#1c3c8c" stroke-width=".4">?</text></g>
<g transform="translate(1314,1030.5)"><g transform="translate(-1.5,-3.5) scale(0.8)"><path d="M-5 -2.500L0 -5L5 -2.500L0 0z" fill="#7aa8f0" stroke="#222" stroke-width=".6"/><path d="M-5 -2.500L0 0V6L-5 3.500z" fill="#4c80d8" stroke="#222" stroke-width=".6"/><path d="M5 -2.500L0 0V6L5 3.500z" fill="#2c58b0" stroke="#222" stroke-width=".6"/></g><g transform="translate(4,3) scale(0.85)"><path d="M-5 -2.500L0 -5L5 -2.500L0 0z" fill="#a8d0e0" stroke="#222" stroke-width=".6"/><path d="M-5 -2.500L0 0V6L-5 3.500z" fill="#78a8c0" stroke="#222" stroke-width=".6"/><path d="M5 -2.500L0 0V6L5 3.500z" fill="#507888" stroke="#222" stroke-width=".6"/></g><path d="M-9 3.500h6M-5.500 .5L-2.500 3.500L-5.500 6.500M-8 0L-4 3.500L-8 7" stroke="#e01818" stroke-width="1.500" fill="none"/></g>
<g transform="translate(1345,1030.5)"><g transform="translate(0,-0.5) scale(1.45)"><path d="M-5 -2.500L0 -5L5 -2.500L0 0z" fill="#f040f0" stroke="#222" stroke-width=".6"/><path d="M-5 -2.500L0 0V6L-5 3.500z" fill="#a8c8b8" stroke="#222" stroke-width=".6"/><path d="M5 -2.500L0 0V6L5 3.500z" fill="#7a9a90" stroke="#222" stroke-width=".6"/></g></g>
<g transform="translate(1376,1030.5)"><rect x="-5" y="-6" width="10" height="12" fill="#e8e8e8" stroke="#555" stroke-width="1"/></g>
<g transform="translate(1407,1030.5)"><circle cx="0" cy="-1" r="7.500" fill="#fff" stroke="#2a9a2a" stroke-width="1.800"/><circle cx="0" cy="-1" r="2" fill="#2c50b0"/></g>
<g transform="translate(1438,1030.5)"><rect x="-8" y="-6" width="7" height="12" fill="#e8e8e8" stroke="#555" stroke-width="1"/><rect x="1" y="-6" width="7" height="12" fill="#e8e8e8" stroke="#555" stroke-width="1"/></g>
<g transform="translate(1900,1010.5)"><circle cx="0" cy="0" r="7" fill="url(#iglobe)" stroke="#0a1a5a" stroke-width=".6"/><path d="M-4 -4Q-1 -6 1 -3Q3 -1 0 1Q-3 2 -4 -1zM2 2Q5 1 5.500 3.500Q4 6 2 5z" fill="#28c428"/></g>
<circle cx="1466.500" cy="1009.500" r="3.400" fill="none" stroke="#7a9ad0" stroke-width="1.300"/>
</svg>
<div class="abs" style="left:1384px;top:1008px;width:181px;height:26px;background:#fff;border:1px solid #d0d0d0;border-left:none;box-sizing:border-box"></div>
<svg class="abs" style="left:0;top:0" width="1920" height="1048" viewBox="0 0 1920 1048">
<g transform="translate(1372.5,1020) rotate(-8)"><rect x="-12.500" y="-13" width="25" height="26" rx="5" fill="#f4511e"/><path d="M6.500 -6.500Q-7 -10.500 -7.500 -3.500Q-7 .5 0 1Q4.500 1.500 4 4Q2.500 6.500 -8 4" fill="none" stroke="#fff" stroke-width="4" stroke-linecap="round"/></g>
<text x="1400" y="1027" font-family="Liberation Sans,Noto Sans CJK SC,sans-serif" font-weight="bold" font-size="19" text-anchor="middle" fill="#1e73d8">中</text>
<circle cx="1418.500" cy="1015.500" r="1.700" fill="none" stroke="#1e73d8" stroke-width="1.300"/><path d="M1424 1020.500q2.500 0 2 2.500q-.5 2-2.500 2.500q1.500-1.500 .5-2.500z" fill="#1e73d8" stroke="#1e73d8" stroke-width=".8"/>
<circle cx="1444" cy="1021" r="7.300" fill="none" stroke="#1e73d8" stroke-width="1.600"/><path d="M1441.500 1017.500v3M1446.500 1017.500v3" stroke="#1e73d8" stroke-width="1.600" stroke-linecap="round"/><path d="M1440 1023.500q4 4 8 0" fill="none" stroke="#1e73d8" stroke-width="1.500" stroke-linecap="round"/>
<rect x="1463" y="1012" width="6.400" height="11.500" rx="3.200" fill="#1e73d8"/><path d="M1460 1020.500q0 6 6.200 6q6.200 0 6.200-6M1466.200 1026.500v3.500" fill="none" stroke="#1e73d8" stroke-width="1.600"/>
<rect x="1480" y="1014.500" width="16.500" height="11.500" rx="1.800" fill="#1e73d8"/><path d="M1482.500 1017.500h1.800m1.400 0h1.800m1.400 0h1.800m1.400 0h1.800M1482.500 1020.300h1.800m1.400 0h1.800m1.400 0h1.800m1.400 0h1.800M1484.500 1023.300h7.500" stroke="#fff" stroke-width="1.500"/>
<circle cx="1509.500" cy="1016" r="3.300" fill="#c4c8d0"/><path d="M1503 1027q0-7 6.500-7q4 0 5.500 3v4z" fill="#c4c8d0"/><rect x="1511.500" y="1022.500" width="6.500" height="6" rx="1" fill="#b4b8c4"/><text x="1514.800" y="1027.800" font-family="Liberation Sans,sans-serif" font-size="5.500" text-anchor="middle" fill="#fff">7</text>
<path d="M1527 1013l-4.500 3.500l2.200 3l1.800-1.200v9.200h10v-9.200l1.800 1.200l2.200-3l-4.500-3.500q-2.500 2.500-5 0z" fill="#1e73d8"/>
<path d="M1546.500 1014h5.500v5.500h-5.500zM1554.500 1014h5.500v5.500h-5.500zM1546.500 1022h5.500v5.500h-5.500zM1554.500 1022h5.500v5.500h-5.500z" fill="#1e73d8"/>
</svg>
</body></html>
